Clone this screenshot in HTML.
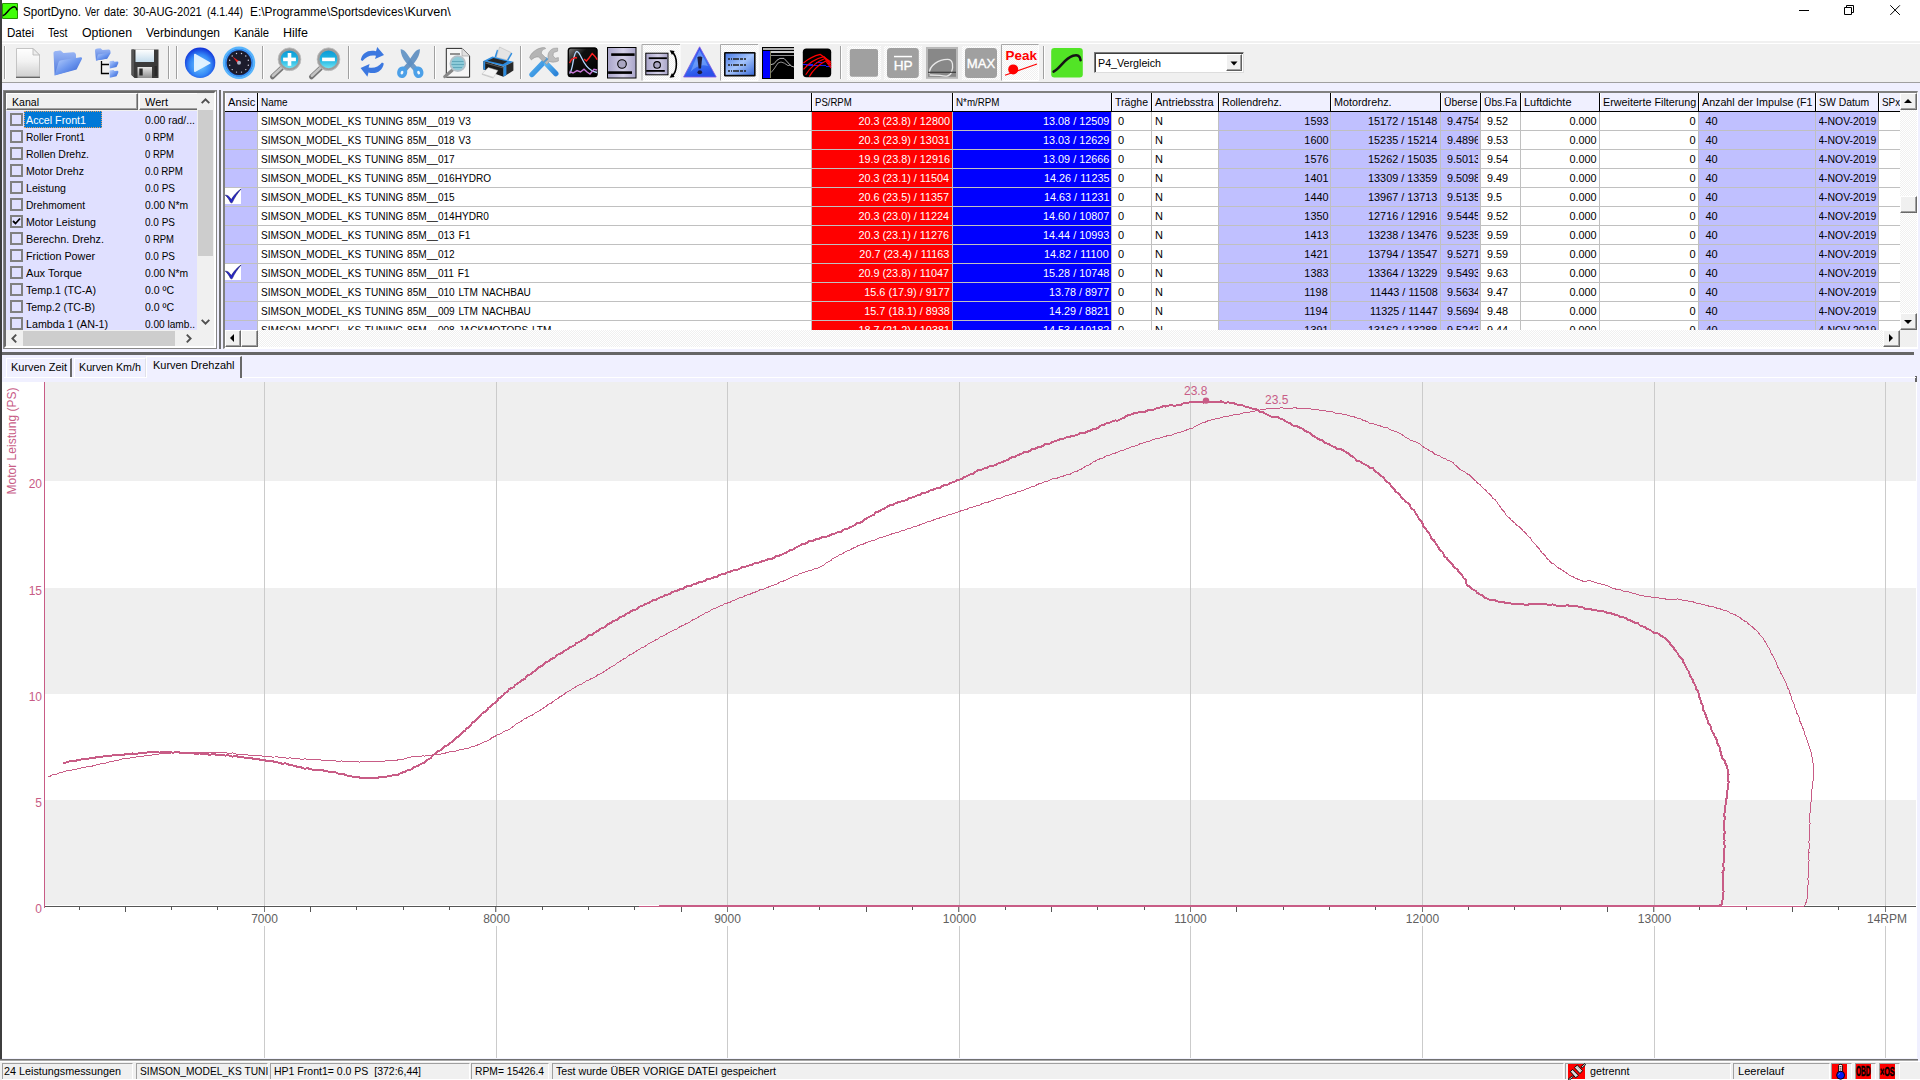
<!DOCTYPE html>
<html lang="de"><head><meta charset="utf-8"><title>SportDyno</title>
<style>
html,body{margin:0;padding:0;background:#F0F0FF;}
#app{position:relative;width:1920px;height:1080px;overflow:hidden;background:#F0F0FF;font-family:"Liberation Sans",sans-serif;font-size:11px;color:#000;}
.t{position:absolute;white-space:pre;line-height:1;}
.r{position:absolute;box-sizing:border-box;}
svg{position:absolute;overflow:visible;}
</style></head>
<body><div id="app">
<div class="r" style="left:0px;top:0px;width:1920px;height:41px;background:#FFFFFF;"></div>
<div class="r" style="left:0px;top:41px;width:1920px;height:41px;background:#F0F0F0;"></div>
<div class="r" style="left:0px;top:43px;width:1920px;height:1px;background:#FFFFFF;"></div>
<div class="r" style="left:0px;top:82px;width:1920px;height:1px;background:#A0A0A0;"></div>
<div class="r" style="left:0px;top:0px;width:2px;height:1080px;background:#3E3E3E;"></div>
<svg style="left:0;top:0" width="20" height="22" viewBox="0 0 20 22"><rect x="2" y="3" width="16" height="16" rx="1" fill="#228A00"/><rect x="2.9" y="3.9" width="14.2" height="14.2" fill="#40FF08"/><path d="M3.4 15.4C6 14.4 7.4 11.2 10 9C12 7.4 13.6 6.6 14.9 6.9C16 7.2 16.6 8.4 16.8 9.7" fill="none" stroke="#000" stroke-width="1.5" stroke-linecap="round"/></svg>
<span class="t" style="top:5.84px;font-size:12px;left:23.1px;transform:scaleX(0.9662);transform-origin:0 0;">SportDyno.</span>
<span class="t" style="top:5.84px;font-size:12px;left:85px;transform:scaleX(0.7993);transform-origin:0 0;">Ver</span>
<span class="t" style="top:5.84px;font-size:12px;left:104.4px;transform:scaleX(0.9138);transform-origin:0 0;">date:</span>
<span class="t" style="top:5.84px;font-size:12px;left:133.1px;transform:scaleX(0.9291);transform-origin:0 0;">30-AUG-2021</span>
<span class="t" style="top:5.84px;font-size:12px;left:206.9px;transform:scaleX(0.8728);transform-origin:0 0;">(4.1.44)</span>
<span class="t" style="top:5.84px;font-size:12px;left:250.3px;transform:scaleX(0.9889);transform-origin:0 0;">E:\Programme</span>
<span class="t" style="top:5.84px;font-size:12px;left:327.2px;transform:scaleX(0.9682);transform-origin:0 0;">\Sportsdevices</span>
<span class="t" style="top:5.84px;font-size:12px;left:403.6px;transform:scaleX(1.0469);transform-origin:0 0;">\Kurven\</span>
<svg style="left:1790px;top:0" width="130" height="22" viewBox="0 0 130 22"><g stroke="#000" stroke-width="1" fill="none"><path d="M9 10.5H19"/><path d="M54.5 7.5h7v7h-7z" fill="#fff"/><path d="M56.5 7.5v-2h7v7h-2"/><path d="M100.3 5.3l9.6 9.6M109.9 5.3l-9.6 9.6"/></g></svg>
<span class="t" style="top:27.04px;font-size:12px;left:7px;transform:scaleX(0.9637);transform-origin:0 0;">Datei</span>
<span class="t" style="top:27.04px;font-size:12px;left:48px;transform:scaleX(0.8857);transform-origin:0 0;">Test</span>
<span class="t" style="top:27.04px;font-size:12px;left:82px;transform:scaleX(1.0266);transform-origin:0 0;">Optionen</span>
<span class="t" style="top:27.04px;font-size:12px;left:146px;transform:scaleX(0.9989);transform-origin:0 0;">Verbindungen</span>
<span class="t" style="top:27.04px;font-size:12px;left:234px;transform:scaleX(0.9365);transform-origin:0 0;">Kanäle</span>
<span class="t" style="top:27.04px;font-size:12px;left:283px;transform:scaleX(1.0410);transform-origin:0 0;">Hilfe</span>
<div class="r" style="left:4px;top:46px;width:1px;height:33px;background:#A0A0A0;"></div>
<div class="r" style="left:5px;top:46px;width:1px;height:33px;background:#FFFFFF;"></div>
<div class="r" style="left:168px;top:46px;width:1px;height:33px;background:#A0A0A0;"></div>
<div class="r" style="left:169px;top:46px;width:1px;height:33px;background:#FFFFFF;"></div>
<div class="r" style="left:176px;top:46px;width:1px;height:33px;background:#A0A0A0;"></div>
<div class="r" style="left:177px;top:46px;width:1px;height:33px;background:#FFFFFF;"></div>
<div class="r" style="left:262px;top:46px;width:1px;height:33px;background:#A0A0A0;"></div>
<div class="r" style="left:263px;top:46px;width:1px;height:33px;background:#FFFFFF;"></div>
<div class="r" style="left:348px;top:46px;width:1px;height:33px;background:#A0A0A0;"></div>
<div class="r" style="left:349px;top:46px;width:1px;height:33px;background:#FFFFFF;"></div>
<div class="r" style="left:434px;top:46px;width:1px;height:33px;background:#A0A0A0;"></div>
<div class="r" style="left:435px;top:46px;width:1px;height:33px;background:#FFFFFF;"></div>
<div class="r" style="left:520px;top:46px;width:1px;height:33px;background:#A0A0A0;"></div>
<div class="r" style="left:521px;top:46px;width:1px;height:33px;background:#FFFFFF;"></div>
<div class="r" style="left:840px;top:46px;width:1px;height:33px;background:#A0A0A0;"></div>
<div class="r" style="left:841px;top:46px;width:1px;height:33px;background:#FFFFFF;"></div>
<div class="r" style="left:1043px;top:46px;width:1px;height:33px;background:#A0A0A0;"></div>
<div class="r" style="left:1044px;top:46px;width:1px;height:33px;background:#FFFFFF;"></div>
<div class="r" style="left:642px;top:44px;width:38px;height:36px;background:repeating-conic-gradient(#FFFFFF 0% 25%, #F0F0F0 0% 50%) 0 0/2px 2px;"></div>
<div class="r" style="left:721px;top:44px;width:37px;height:36px;background:repeating-conic-gradient(#FFFFFF 0% 25%, #F0F0F0 0% 50%) 0 0/2px 2px;"></div>
<div class="r" style="left:1002px;top:44px;width:36px;height:36px;background:repeating-conic-gradient(#FFFFFF 0% 25%, #F0F0F0 0% 50%) 0 0/2px 2px;"></div>
<div class="r" style="left:847px;top:46px;width:34px;height:34px;background:repeating-conic-gradient(#FFFFFF 0% 25%, #F0F0F0 0% 50%) 0 0/2px 2px;"></div>
<div class="r" style="left:884px;top:46px;width:38px;height:34px;background:repeating-conic-gradient(#FFFFFF 0% 25%, #F0F0F0 0% 50%) 0 0/2px 2px;"></div>
<div class="r" style="left:962px;top:46px;width:38px;height:34px;background:repeating-conic-gradient(#FFFFFF 0% 25%, #F0F0F0 0% 50%) 0 0/2px 2px;"></div>
<svg style="left:0;top:0" width="1260" height="84" viewBox="0 0 1260 84">
<defs>
<linearGradient id="gdoc" x1="0" y1="0" x2="0" y2="1"><stop offset="0" stop-color="#FFFFFF"/><stop offset="0.45" stop-color="#F2F2F2"/><stop offset="1" stop-color="#CFCFCF"/></linearGradient>
<linearGradient id="gfold" x1="0" y1="0" x2="1" y2="1"><stop offset="0" stop-color="#BCD2FC"/><stop offset="0.5" stop-color="#6C96EE"/><stop offset="1" stop-color="#2E5ACC"/></linearGradient>
<linearGradient id="gfoldb" x1="0" y1="0" x2="0" y2="1"><stop offset="0" stop-color="#9CB8F6"/><stop offset="1" stop-color="#4C76DA"/></linearGradient>
<radialGradient id="gplay" cx="0.5" cy="0.58" r="0.58"><stop offset="0" stop-color="#74CCFF"/><stop offset="0.6" stop-color="#3488F6"/><stop offset="1" stop-color="#1030D8"/></radialGradient>
<linearGradient id="glens" x1="0" y1="0" x2="0" y2="1"><stop offset="0" stop-color="#0896D4"/><stop offset="0.55" stop-color="#24B8E4"/><stop offset="1" stop-color="#7CE8F4"/></linearGradient>
<linearGradient id="gtri" x1="0" y1="0" x2="0.3" y2="1"><stop offset="0" stop-color="#2A3CF0"/><stop offset="0.6" stop-color="#3C78F4"/><stop offset="1" stop-color="#2A50E8"/></linearGradient>
<linearGradient id="glist" x1="0" y1="0" x2="1" y2="1"><stop offset="0" stop-color="#4C7CE4"/><stop offset="0.5" stop-color="#A4C4FC"/><stop offset="1" stop-color="#3C6CD8"/></linearGradient>
<linearGradient id="gscr" x1="0" y1="0" x2="1" y2="0"><stop offset="0" stop-color="#A8A4C8"/><stop offset="0.55" stop-color="#D4D0E8"/><stop offset="1" stop-color="#A8A4C8"/></linearGradient>
<linearGradient id="gmet" x1="0" y1="0" x2="0" y2="1"><stop offset="0" stop-color="#E8E8E8"/><stop offset="1" stop-color="#8C8C8C"/></linearGradient>
<linearGradient id="gflop" x1="0" y1="0" x2="0" y2="1"><stop offset="0" stop-color="#FFFFFF"/><stop offset="1" stop-color="#C4DCEC"/></linearGradient>
<linearGradient id="ghand" x1="0" y1="0" x2="1" y2="1"><stop offset="0" stop-color="#58B4F0"/><stop offset="1" stop-color="#2C84D8"/></linearGradient>
<linearGradient id="ggloss" x1="0" y1="0" x2="1" y2="1"><stop offset="0" stop-color="#8A8A8A"/><stop offset="0.35" stop-color="#101010"/><stop offset="1" stop-color="#000"/></linearGradient>
</defs>
<path d="M642 80.5V44.5H680" fill="none" stroke="#A8A8A8" stroke-width="1"/><path d="M643 80.5H680V45" fill="none" stroke="#FFFFFF" stroke-width="1"/>
<path d="M720.5 80.5V44.5H758" fill="none" stroke="#A8A8A8" stroke-width="1"/><path d="M721.5 80.5H758V45" fill="none" stroke="#FFFFFF" stroke-width="1"/>
<path d="M1001.5 80.5V44.5H1038.5" fill="none" stroke="#A8A8A8" stroke-width="1"/><path d="M1002.5 80.5H1038.5V45" fill="none" stroke="#FFFFFF" stroke-width="1"/>
<path d="M16.5 48.5H33L39.5 55V77H16.5Z" fill="url(#gdoc)" stroke="#C4C4C4" stroke-width="1"/><path d="M16 77.3H40" stroke="#5A5A5A" stroke-width="1.2"/><path d="M33 48.5V55H39.5Z" fill="#EDEDED" stroke="#B4B4B4" stroke-width="0.8"/>
<path d="M53.5 53C53.5 51.5 55 51 56.5 51L60 50.6C61.5 50.6 62 52.5 63.5 53L73 52.2C75 52 76 53.5 76 55V69L54.6 75.3Z" fill="url(#gfoldb)"/><path d="M58.5 62.5C59 61 60 60.5 61.5 60.3L80.5 57.2C82 57 82.4 58 81.8 59.2L76.6 69.6L54.6 75.4Z" fill="url(#gfold)"/>
<path d="M95 51C95 49 96 48.5 97.5 48.4L100.5 48.2L102.5 50L108.5 49.6C110 49.5 110.5 50.5 110.5 52L107 58.5L96 60.5Z" fill="url(#gfoldb)"/><path d="M98 54.5L111 52.5L107.2 58.8L95.8 60.6Z" fill="url(#gfold)"/>
<path d="M101.5 61V73.5H109M101.5 64.5H109" fill="none" stroke="#000" stroke-width="1.3"/>
<path d="M109.5 62.2C109.5 61.2 110 61 111 61L113.5 60.8L114.5 61.8L117.5 61.6C118.3 61.6 118.5 62.5 118.2 63.5L116.5 67L109.8 68.6Z" fill="url(#gfold)"/>
<path d="M109.5 71.4C109.5 70.4 110 70.2 111 70.2L113.5 70.0L114.5 71.0L117.5 70.8C118.3 70.8 118.5 71.7 118.2 72.7L116.5 76.2L109.8 77.8Z" fill="url(#gfold)"/>
<path d="M131.5 49.5H158.5V78H134.5L131.5 75Z" fill="#3A3A3A"/><path d="M131.5 49.5H134V76.5L131.5 75Z" fill="#555"/><rect x="135.5" y="49.5" width="18.5" height="12.5" fill="url(#gflop)"/><rect x="137.5" y="67" width="14.5" height="11" fill="url(#gmet)"/><rect x="139.3" y="68.5" width="3.4" height="7" fill="#2A2A2A"/><rect x="154.5" y="66" width="2.5" height="10" fill="#2A2A2A"/>
<circle cx="200.1" cy="62.8" r="15.2" fill="url(#gplay)"/><path d="M194 54.8C194 53.8 194.8 53.6 195.6 54L210 62.2C210.8 62.7 210.8 63.4 210 63.8L195.6 71.8C194.8 72.2 194 72 194 71Z" fill="#EAF6FF" opacity="0.93"/>
<circle cx="239" cy="62.8" r="15" fill="#1C4CC0" stroke="#58B4FC" stroke-width="2.4"/><circle cx="239" cy="62.8" r="13.2" fill="none" stroke="#3C98F4" stroke-width="1.4"/><circle cx="239" cy="62.8" r="12.2" fill="#1C1C2C"/>
<circle cx="248.3" cy="65.3" r="0.7" fill="#D8D8E8"/>
<circle cx="245.8" cy="69.6" r="0.7" fill="#D8D8E8"/>
<circle cx="241.5" cy="72.1" r="0.7" fill="#D8D8E8"/>
<circle cx="236.5" cy="72.1" r="0.7" fill="#D8D8E8"/>
<circle cx="232.2" cy="69.6" r="0.7" fill="#D8D8E8"/>
<circle cx="229.7" cy="65.3" r="0.7" fill="#D8D8E8"/>
<circle cx="229.7" cy="60.3" r="0.7" fill="#D8D8E8"/>
<circle cx="232.2" cy="56.0" r="0.7" fill="#D8D8E8"/>
<circle cx="236.5" cy="53.5" r="0.7" fill="#D8D8E8"/>
<circle cx="241.5" cy="53.5" r="0.7" fill="#D8D8E8"/>
<circle cx="245.8" cy="56.0" r="0.7" fill="#D8D8E8"/>
<circle cx="248.3" cy="60.3" r="0.7" fill="#D8D8E8"/>
<path d="M232.4 56.4L240 61.8L238 63.8Z" fill="#F02020"/><circle cx="239" cy="62.8" r="2" fill="#A8B0C4"/>
<path d="M272.5 76.8L281.5 68.2" stroke="#747474" stroke-width="5" stroke-linecap="round"/><path d="M272.9 75.8L280.9 68.2" stroke="#C4C4C4" stroke-width="2.6" stroke-linecap="round"/>
<circle cx="289.5" cy="59.3" r="10.2" fill="url(#glens)" stroke="#9C9C9C" stroke-width="2.6"/><circle cx="289.5" cy="59.3" r="11.4" fill="none" stroke="#C4C4C4" stroke-width="0.8"/>
<rect x="283.1" y="57.6" width="12.8" height="3.6" fill="#fff"/>
<rect x="287.7" y="53" width="3.6" height="12.8" fill="#fff"/>
<path d="M311.5 76.8L320.5 68.2" stroke="#747474" stroke-width="5" stroke-linecap="round"/><path d="M311.9 75.8L319.9 68.2" stroke="#C4C4C4" stroke-width="2.6" stroke-linecap="round"/>
<circle cx="328.5" cy="59.3" r="10.2" fill="url(#glens)" stroke="#9C9C9C" stroke-width="2.6"/><circle cx="328.5" cy="59.3" r="11.4" fill="none" stroke="#C4C4C4" stroke-width="0.8"/>
<rect x="322.1" y="57.6" width="12.8" height="3.6" fill="#fff"/>
<path d="M360.8 60C362 53 368 49.5 376 51.2L377.2 47L384 55L375 59L376 55.8C371 54.5 366 56.5 362.5 61Z" fill="#3C78E0"/><path d="M383.8 63.5C382.5 71 376.5 74.5 368.5 72.6L367.4 76.8L360.6 68L369.6 64L368.6 67.4C373.5 68.8 378.6 66.8 382 62.5Z" fill="#3C78E0"/>
<path d="M400.6 49.2C403 48.8 405.6 51.4 407.6 54.6L413 62.6L418.2 68.2L414.2 71.4C411.5 67.8 408.6 65 406 62.4C402.6 58.4 400.6 53.6 400.6 49.2Z" fill="#6C9AC8"/><path d="M420 49.2C417.6 48.8 415 51.4 413 54.6L407.6 62.6L402.4 68.2L406.4 71.4C409.1 67.8 412 65 414.6 62.4C418 58.4 420 53.6 420 49.2Z" fill="#5E8EC0" opacity="0.92"/>
<path d="M402.2 66.4C405.4 66.2 407.6 68.6 407.2 72.4C406.8 76 404.4 78.2 401.6 78C398.6 77.8 396.8 75.2 397.2 71.8C397.6 68.6 399.6 66.6 402.2 66.4Z" fill="#4CA0E8"/><path d="M418.4 66.4C415.2 66.2 413 68.6 413.4 72.4C413.8 76 416.2 78.2 419 78C422 77.8 423.8 75.2 423.4 71.8C423 68.6 421 66.6 418.4 66.4Z" fill="#4CA0E8"/><ellipse cx="402" cy="72.6" rx="1.3" ry="1.9" fill="#F4F8FC" transform="rotate(25 402 72.6)"/><ellipse cx="418.6" cy="72.6" rx="1.3" ry="1.9" fill="#F4F8FC" transform="rotate(-25 418.6 72.6)"/>
<path d="M446.3 48.4H462L469.6 56V77.2H446.3Z" fill="#F6F6F6" stroke="#101010" stroke-width="0.9"/><path d="M462 48.5V56H469.5" fill="#E0E0E0" stroke="#A0A0A0" stroke-width="0.7"/><path d="M450 54H460" stroke="#505050" stroke-width="1.2"/><path d="M452.2 70.2L444.8 76.6" stroke="#888" stroke-width="3.2" stroke-linecap="round"/><circle cx="457.8" cy="63.6" r="7.4" fill="#8CCAD8" stroke="#B4C0C8" stroke-width="1.8"/><path d="M452 61.5H463.5M451.5 64.5H464M453 67.5H462" stroke="#5CA4B8" stroke-width="0.9"/>
<path d="M499.6 47L511.2 52.6L507.2 60L496.4 57.2Z" fill="#E4E4E4" stroke="#B4B4B4" stroke-width="0.5"/><path d="M498 50.5L496.2 57.4L494.6 56.8L497 49.6Z" fill="#2C8CE0"/><path d="M511.2 52.8L512.4 53.6L508.4 60.6L507 60Z" fill="#2C8CE0"/>
<path d="M483.4 61L492.4 56.4L496.6 57.4L507 60.2L513.4 61.8L503.4 66.6Z" fill="#2C8CE0"/><path d="M487.5 60.8L493.5 58L507.5 61.6L502.8 64.2Z" fill="#262626"/>
<path d="M483.4 61L503.4 66.8V76.8L483.4 69.4Z" fill="#1A1A1A"/><path d="M503.4 66.8L513.4 61.8V70.6L503.4 76.8Z" fill="#2A2A2A"/><path d="M483.4 61L485.2 61.6V70L483.4 69.4Z" fill="#2C8CE0"/><path d="M503.4 66.8L506.4 65.4V75L503.4 76.8Z" fill="#2C8CE0"/><path d="M485.2 62.2L503.4 67.4V68.6L485.2 63.4Z" fill="#555"/>
<path d="M488.2 67.6L497.8 70.4L493.6 77.4L482 73.8Z" fill="#F4F4F4" stroke="#BcBcBc" stroke-width="0.5"/><path d="M482 73.8L493.6 77.4L493.2 78.4L481.8 74.8Z" fill="#C8C8C8"/>
<path d="M532 74.5L545.8 60.2" stroke="url(#ghand)" stroke-width="5.4" stroke-linecap="round"/><path d="M555.8 73.6L546.6 64" stroke="url(#ghand)" stroke-width="5.4" stroke-linecap="round"/>
<path d="M529.6 57.5C531 53 536 48.6 542.5 47.6C544 47.4 545.8 47.8 545.6 48.6C542.5 49.5 541 51.5 541.4 53.5L546.5 58.6L543.4 61.8L538.6 57C536 56.5 533 58 531.4 60Z" fill="#B4B4B4" stroke="#8C8C8C" stroke-width="0.5"/>
<path d="M544.8 62.6L548.4 59C547 55 548.6 50.4 553.4 48.4L557.6 48V51.2L553.4 52.6L553 56L555.4 58.2L558.4 57.6V61C554.6 62.6 551.6 62.4 549.4 61.4L546.8 64.6Z" fill="#BCBCBC" stroke="#8C8C8C" stroke-width="0.5"/>
<rect x="567.6" y="47.4" width="30" height="29.8" rx="3" fill="url(#ggloss)"/><rect x="568.4" y="48.2" width="28.4" height="28.2" rx="2.4" fill="none" stroke="#000" stroke-width="1.2"/>
<path d="M569.5 73.5C573.5 70 573 51.5 576.8 51.5C581.5 51.5 582 69 597 72.5" fill="none" stroke="#B4D8FF" stroke-width="1.3"/><path d="M569.5 63L571.5 59.5L575 57.5L577 58M584 59L586.4 61L589 58L592.2 53.6L595 56.4L597.2 59.6" fill="none" stroke="#FF2020" stroke-width="1.4"/><path d="M569.5 71.5L573 73L577 70.6L580.5 72L584 69.2L587 72L590 74L594 69.2L597 70" fill="none" stroke="#C878D8" stroke-width="1.4"/>
<rect x="607.5" y="47.5" width="28.5" height="30.5" fill="url(#gscr)" stroke="#000" stroke-width="1"/><rect x="611.2" y="53.3" width="23.4" height="2.6" fill="#000"/><rect x="608.1" y="71.3" width="23.9" height="2.6" fill="#000"/><circle cx="622.0" cy="64.0" r="4.3" fill="#AAA6C2" stroke="#000" stroke-width="1.1"/>
<rect x="645.8" y="53.2" width="22.200000000000045" height="21.599999999999994" fill="url(#gscr)" stroke="#000" stroke-width="1"/><rect x="648.7" y="57.3" width="18.2" height="1.8" fill="#000"/><rect x="646.2" y="70.0" width="18.6" height="1.8" fill="#000"/><circle cx="657.1" cy="64.9" r="3.3" fill="#AAA6C2" stroke="#000" stroke-width="1.1"/>
<path d="M671.5 51.5C678 56 678 72 671.5 76.5" fill="none" stroke="#000" stroke-width="1.6"/><path d="M669.6 50.2L674.6 51L672 55Z" fill="#000"/><path d="M669.6 77.8L674.6 77L672 73Z" fill="#000"/>
<path d="M699.6 46.8L716.2 77H683.6Z" fill="url(#gtri)" stroke="#8458E0" stroke-width="0.8" stroke-linejoin="round"/><path d="M699.4 50L708 66C702 64 696 66 690.4 72Z" fill="#9CC4FF" opacity="0.45"/><path d="M697.4 57.5C697.4 56 702.2 56 702.2 57.5L701 68.6H698.6Z" fill="#1C1C3C"/><ellipse cx="699.8" cy="72.2" rx="2.3" ry="2" fill="#1C1C3C"/>
<rect x="724" y="52" width="31.6" height="24.4" rx="1.2" fill="#0C0C0C"/><rect x="725.6" y="53.6" width="28.4" height="21.2" fill="url(#glist)"/><path d="M728 59H747M728 65H747M728 71H747" stroke="#20201C" stroke-width="1.7" stroke-dasharray="2 1 1 1 6 1 3 1"/>
<g shape-rendering="crispEdges"><rect x="762" y="47" width="32" height="32" fill="#000"/><rect x="763" y="51" width="8" height="27" fill="#0000FF"/><rect x="763" y="48" width="31" height="2" fill="#B0B0B0"/><rect x="771" y="51" width="23" height="2" fill="#C8C8C8"/><rect x="771" y="55" width="23" height="1" fill="#909090"/><rect x="770" y="51" width="1" height="27" fill="#808060"/></g>
<path d="M771 64.6L774 63.8L777 60.2L780 58.4L784 58.4L787.4 62L791 66L794 67" fill="none" stroke="#B4B4B4" stroke-width="1"/><path d="M771 72.6L774 69L778 63L781 62L784.4 63.2L788 65.6L791 65" fill="none" stroke="#909090" stroke-width="1"/>
<rect x="802.8" y="48.6" width="28.4" height="28.6" rx="3.6" fill="#000"/><path d="M803 64.5H813M816 62.5H823M806 65.5H826M827 63.5H831M826 66.5H831" stroke="#1818F0" stroke-width="1"/>
<path d="M803.5 63Q811 56.5 820.3 54.4L830.8 62" fill="none" stroke="#FF0000" stroke-width="1.2"/>
<path d="M803.5 69.3Q812 59.5 823.9 56.6L831 64" fill="none" stroke="#FF0000" stroke-width="1.2"/>
<path d="M805.7 74.8Q813 63 825 58.5L831 66" fill="none" stroke="#FF0000" stroke-width="1.2"/>
<path d="M809.3 76.6Q815 66.5 825.7 61L831 68" fill="none" stroke="#FF0000" stroke-width="1.2"/>
<rect x="849.8" y="49" width="28.2" height="27.8" rx="2" fill="#A0A0A0"/>
<rect x="887" y="48" width="31.8" height="30" rx="3.4" fill="#A0A0A0"/><rect x="894" y="55.8" width="18" height="1.5" fill="#fff"/>
<text x="903.1" y="69.7" text-anchor="middle" font-family="Liberation Sans, sans-serif" font-size="13.6" stroke="#fff" stroke-width="0.35" fill="#fff">HP</text>
<rect x="926" y="47" width="32" height="31.8" fill="#B8B8B8"/><rect x="928" y="49" width="28" height="27.8" fill="#888"/><path d="M929.4 73.6C929 65 939 59.6 947.4 59.4C953.4 59.2 953.6 67 951.4 72.6C949.6 77 945 76.4 940 75.4L929.6 75" fill="none" stroke="#E8E8E8" stroke-width="1.3"/><path d="M928 72.3H956" stroke="#3C3C3C" stroke-width="1.2"/>
<rect x="965" y="48" width="32" height="30" rx="3.4" fill="#A0A0A0"/>
<text x="981" y="67.6" text-anchor="middle" font-family="Liberation Sans, sans-serif" font-size="13" stroke="#fff" stroke-width="0.35" fill="#fff" textLength="28.4" lengthAdjust="spacingAndGlyphs">MAX</text>
<text x="1005.6" y="60.4" font-family="Liberation Sans, sans-serif" font-weight="bold" font-size="13.4" fill="#FF0000" textLength="31.4" lengthAdjust="spacingAndGlyphs">Peak</text><path d="M1005 75.2L1037 64" stroke="#FF0000" stroke-width="1.2"/><circle cx="1013.2" cy="69.4" r="5" fill="#FF0000"/>
<rect x="1051.2" y="48" width="31.6" height="29.4" rx="3.2" fill="#52E426"/><path d="M1053.6 71.6C1061 67.5 1064.5 58.4 1073 55.8C1078 54.4 1080 56 1080.6 60.2" fill="none" stroke="#141414" stroke-width="2.5" stroke-linecap="round"/>
</svg>
<div class="r" style="left:1094px;top:52px;width:150px;height:21px;background:#FFFFFF;border:1px solid #7A7A7A;border-right-color:#ddd;border-bottom-color:#ddd;box-shadow:inset 1px 1px 0 #404040;"></div>
<span class="t" style="top:57.69px;font-size:11px;left:1098.3px;transform:scaleX(0.9718);transform-origin:0 0;">P4_Vergleich</span>
<div class="r" style="left:1226px;top:54px;width:16px;height:17px;background:#F0F0F0;border:1px solid #fff;border-right-color:#606060;border-bottom-color:#606060;box-shadow:inset -1px -1px 0 #A0A0A0;"></div>
<svg style="left:1230px;top:61px" width="8" height="5" viewBox="0 0 8 5"><path d="M0.5 0.5h7l-3.5 4z" fill="#000"/></svg>
<div class="r" style="left:3px;top:90px;width:214px;height:259px;background:#E0E0FF;border:1px solid #868686;"></div>
<div class="r" style="left:4px;top:91px;width:212px;height:257px;border:2px solid #696969;border-right:2px solid #FFFFFF;border-bottom:2px solid #FFFFFF;"></div>
<div class="r" style="left:6px;top:93px;width:191px;height:18px;background:#F0F0F0;"></div>
<div class="r" style="left:6px;top:93px;width:132px;height:17px;background:#F0F0F0;border-right:1px solid #696969;border-bottom:1px solid #696969;border-top:1px solid #fff;border-left:1px solid #fff;box-shadow:inset -1px -1px 0 #A0A0A0;"></div>
<div class="r" style="left:139px;top:93px;width:58px;height:17px;background:#F0F0F0;border-bottom:1px solid #696969;border-top:1px solid #fff;border-left:1px solid #fff;box-shadow:inset 0 -1px 0 #A0A0A0;"></div>
<span class="t" style="top:96.69px;font-size:11px;left:12px;transform:scaleX(0.9595);transform-origin:0 0;">Kanal</span>
<span class="t" style="top:96.69px;font-size:11px;left:145px;transform:scaleX(0.9986);transform-origin:0 0;">Wert</span>
<div class="r" style="left:197px;top:93px;width:17px;height:237px;background:#F0F0F0;"></div>
<div class="r" style="left:198px;top:110px;width:15px;height:146px;background:#CDCDCD;"></div>
<svg style="left:201px;top:98px" width="9" height="6" viewBox="0 0 9 6"><path d="M0.7 5.2L4.5 1.4L8.3 5.2" fill="none" stroke="#505050" stroke-width="1.9"/></svg>
<svg style="left:201px;top:319px" width="9" height="6" viewBox="0 0 9 6"><path d="M0.7 0.8L4.5 4.6L8.3 0.8" fill="none" stroke="#505050" stroke-width="1.9"/></svg>
<div class="r" style="left:6px;top:330px;width:208px;height:16px;background:#F0F0F0;"></div>
<div class="r" style="left:23px;top:331px;width:152px;height:15px;background:#CDCDCD;"></div>
<svg style="left:11px;top:334px" width="6" height="9" viewBox="0 0 6 9"><path d="M5.2 0.7L1.4 4.5L5.2 8.3" fill="none" stroke="#505050" stroke-width="1.9"/></svg>
<svg style="left:186px;top:334px" width="6" height="9" viewBox="0 0 6 9"><path d="M0.8 0.7L4.6 4.5L0.8 8.3" fill="none" stroke="#505050" stroke-width="1.9"/></svg>
<div class="r" style="left:6px;top:111px;width:191px;height:219px;overflow:hidden">
<div class="r" style="left:4px;top:2px;width:13px;height:13px;border:2px solid #808080;"></div>
<div class="r" style="left:18px;top:0px;width:78px;height:17px;background:#0078D7;outline:1px dotted #E8A060;outline-offset:-1px;"></div>
<span class="t" style="left:20.3px;top:3.69px;color:#fff;transform:scaleX(0.9717);transform-origin:0 0">Accel Front1</span>
<span class="t" style="left:139px;top:3.69px;transform:scaleX(0.9507);transform-origin:0 0">0.00 rad/...</span>
<div class="r" style="left:4px;top:19px;width:13px;height:13px;border:2px solid #808080;"></div>
<span class="t" style="left:20.3px;top:20.69px;transform:scaleX(0.9280);transform-origin:0 0">Roller Front1</span>
<span class="t" style="left:139px;top:20.69px;transform:scaleX(0.8625);transform-origin:0 0">0 RPM</span>
<div class="r" style="left:4px;top:36px;width:13px;height:13px;border:2px solid #808080;"></div>
<span class="t" style="left:20.3px;top:37.69px;transform:scaleX(0.9454);transform-origin:0 0">Rollen Drehz.</span>
<span class="t" style="left:139px;top:37.69px;transform:scaleX(0.8625);transform-origin:0 0">0 RPM</span>
<div class="r" style="left:4px;top:53px;width:13px;height:13px;border:2px solid #808080;"></div>
<span class="t" style="left:20.3px;top:54.69px;transform:scaleX(0.9582);transform-origin:0 0">Motor Drehz</span>
<span class="t" style="left:139px;top:54.69px;transform:scaleX(0.8879);transform-origin:0 0">0.0 RPM</span>
<div class="r" style="left:4px;top:70px;width:13px;height:13px;border:2px solid #808080;"></div>
<span class="t" style="left:20.3px;top:71.69px;transform:scaleX(0.9617);transform-origin:0 0">Leistung</span>
<span class="t" style="left:139px;top:71.69px;transform:scaleX(0.9082);transform-origin:0 0">0.0 PS</span>
<div class="r" style="left:4px;top:87px;width:13px;height:13px;border:2px solid #808080;"></div>
<span class="t" style="left:20.3px;top:88.69px;transform:scaleX(0.9280);transform-origin:0 0">Drehmoment</span>
<span class="t" style="left:139px;top:88.69px;transform:scaleX(0.9376);transform-origin:0 0">0.00 N*m</span>
<div class="r" style="left:4px;top:104px;width:13px;height:13px;border:2px solid #808080;"></div>
<svg style="left:6px;top:106px" width="9" height="9" viewBox="0 0 9 9"><path d="M1 4L3.5 6.5L8 1.5" fill="none" stroke="#000" stroke-width="1.8"/></svg>
<span class="t" style="left:20.3px;top:105.69px;transform:scaleX(0.9620);transform-origin:0 0">Motor Leistung</span>
<span class="t" style="left:139px;top:105.69px;transform:scaleX(0.9082);transform-origin:0 0">0.0 PS</span>
<div class="r" style="left:4px;top:121px;width:13px;height:13px;border:2px solid #808080;"></div>
<span class="t" style="left:20.3px;top:122.69px;transform:scaleX(0.9813);transform-origin:0 0">Berechn. Drehz.</span>
<span class="t" style="left:139px;top:122.69px;transform:scaleX(0.8625);transform-origin:0 0">0 RPM</span>
<div class="r" style="left:4px;top:138px;width:13px;height:13px;border:2px solid #808080;"></div>
<span class="t" style="left:20.3px;top:139.69px;transform:scaleX(0.9816);transform-origin:0 0">Friction Power</span>
<span class="t" style="left:139px;top:139.69px;transform:scaleX(0.9082);transform-origin:0 0">0.0 PS</span>
<div class="r" style="left:4px;top:155px;width:13px;height:13px;border:2px solid #808080;"></div>
<span class="t" style="left:20.3px;top:156.69px;transform:scaleX(1.0099);transform-origin:0 0">Aux Torque</span>
<span class="t" style="left:139px;top:156.69px;transform:scaleX(0.9376);transform-origin:0 0">0.00 N*m</span>
<div class="r" style="left:4px;top:172px;width:13px;height:13px;border:2px solid #808080;"></div>
<span class="t" style="left:20.3px;top:173.69px;transform:scaleX(0.9705);transform-origin:0 0">Temp.1 (TC-A)</span>
<span class="t" style="left:139px;top:173.69px;transform:scaleX(0.9567);transform-origin:0 0">0.0 ºC</span>
<div class="r" style="left:4px;top:189px;width:13px;height:13px;border:2px solid #808080;"></div>
<span class="t" style="left:20.3px;top:190.69px;transform:scaleX(0.9567);transform-origin:0 0">Temp.2 (TC-B)</span>
<span class="t" style="left:139px;top:190.69px;transform:scaleX(0.9567);transform-origin:0 0">0.0 ºC</span>
<div class="r" style="left:4px;top:206px;width:13px;height:13px;border:2px solid #808080;"></div>
<span class="t" style="left:20.3px;top:207.69px;transform:scaleX(0.9719);transform-origin:0 0">Lambda 1 (AN-1)</span>
<span class="t" style="left:139px;top:207.69px;transform:scaleX(0.9187);transform-origin:0 0">0.00 lamb..</span>
</div>
<div class="r" style="left:219px;top:90px;width:2px;height:259px;background:#707070;"></div>
<div class="r" style="left:2px;top:352px;width:1912px;height:3px;background:#666666;"></div>
<div class="r" style="left:1915px;top:376px;width:2px;height:6px;background:#666666;"></div>
<div class="r" style="left:223px;top:91px;width:1695px;height:258px;background:#FFFFFF;border:2px solid #808080;border-right:1px solid #fff;border-bottom:1px solid #fff;"></div>
<div class="r" style="left:225px;top:93px;width:1675px;height:237px;overflow:hidden;background:#fff">
<div class="r" style="left:0px;top:19px;width:32px;height:218px;background:#C0C0FF;"></div>
<div class="r" style="left:587px;top:19px;width:140px;height:218px;background:#FF0000;"></div>
<div class="r" style="left:728px;top:19px;width:158px;height:218px;background:#0000FF;"></div>
<div class="r" style="left:994px;top:19px;width:111px;height:218px;background:#C0C0FF;"></div>
<div class="r" style="left:1106px;top:19px;width:109px;height:218px;background:#C0C0FF;"></div>
<div class="r" style="left:1216px;top:19px;width:39px;height:218px;background:#C0C0FF;"></div>
<div class="r" style="left:1474px;top:19px;width:116px;height:218px;background:#C0C0FF;"></div>
<div class="r" style="left:1591px;top:19px;width:62px;height:218px;background:#C0C0FF;"></div>
<div class="r" style="left:0px;top:37px;width:1675px;height:1px;background:#C0C0C0;"></div>
<div class="r" style="left:0px;top:56px;width:1675px;height:1px;background:#C0C0C0;"></div>
<div class="r" style="left:0px;top:75px;width:1675px;height:1px;background:#C0C0C0;"></div>
<div class="r" style="left:0px;top:94px;width:1675px;height:1px;background:#C0C0C0;"></div>
<div class="r" style="left:0px;top:113px;width:1675px;height:1px;background:#C0C0C0;"></div>
<div class="r" style="left:0px;top:132px;width:1675px;height:1px;background:#C0C0C0;"></div>
<div class="r" style="left:0px;top:151px;width:1675px;height:1px;background:#C0C0C0;"></div>
<div class="r" style="left:0px;top:170px;width:1675px;height:1px;background:#C0C0C0;"></div>
<div class="r" style="left:0px;top:189px;width:1675px;height:1px;background:#C0C0C0;"></div>
<div class="r" style="left:0px;top:208px;width:1675px;height:1px;background:#C0C0C0;"></div>
<div class="r" style="left:0px;top:227px;width:1675px;height:1px;background:#C0C0C0;"></div>
<div class="r" style="left:0px;top:246px;width:1675px;height:1px;background:#C0C0C0;"></div>
<div class="r" style="left:32px;top:19px;width:1px;height:218px;background:#C0C0C0;"></div>
<div class="r" style="left:586px;top:19px;width:1px;height:218px;background:#C0C0C0;"></div>
<div class="r" style="left:727px;top:19px;width:1px;height:218px;background:#C0C0C0;"></div>
<div class="r" style="left:886px;top:19px;width:1px;height:218px;background:#C0C0C0;"></div>
<div class="r" style="left:926px;top:19px;width:1px;height:218px;background:#C0C0C0;"></div>
<div class="r" style="left:993px;top:19px;width:1px;height:218px;background:#C0C0C0;"></div>
<div class="r" style="left:1105px;top:19px;width:1px;height:218px;background:#C0C0C0;"></div>
<div class="r" style="left:1215px;top:19px;width:1px;height:218px;background:#C0C0C0;"></div>
<div class="r" style="left:1255px;top:19px;width:1px;height:218px;background:#C0C0C0;"></div>
<div class="r" style="left:1295px;top:19px;width:1px;height:218px;background:#C0C0C0;"></div>
<div class="r" style="left:1374px;top:19px;width:1px;height:218px;background:#C0C0C0;"></div>
<div class="r" style="left:1473px;top:19px;width:1px;height:218px;background:#C0C0C0;"></div>
<div class="r" style="left:1590px;top:19px;width:1px;height:218px;background:#C0C0C0;"></div>
<div class="r" style="left:1653px;top:19px;width:1px;height:218px;background:#C0C0C0;"></div>
<div class="r" style="left:1675px;top:19px;width:1px;height:218px;background:#C0C0C0;"></div>
<div class="r" style="left:0px;top:0px;width:1675px;height:18px;background:#F0F0FF;"></div>
<div class="r" style="left:0px;top:18px;width:1675px;height:1px;background:#000;"></div>
<div class="r" style="left:32px;top:0px;width:1px;height:19px;background:#000;"></div>
<div class="r" style="left:0px;top:0px;width:1px;height:18px;background:#FFF;"></div>
<div class="r" style="left:1px;top:0;width:31px;height:18px;overflow:hidden"><span class="t" style="left:2px;top:3.69px;transform:scaleX(1.013);transform-origin:0 0">Ansic</span></div>
<div class="r" style="left:586px;top:0px;width:1px;height:19px;background:#000;"></div>
<div class="r" style="left:33px;top:0px;width:1px;height:18px;background:#FFF;"></div>
<div class="r" style="left:34px;top:0;width:552px;height:18px;overflow:hidden"><span class="t" style="left:2px;top:3.69px;transform:scaleX(0.906);transform-origin:0 0">Name</span></div>
<div class="r" style="left:727px;top:0px;width:1px;height:19px;background:#000;"></div>
<div class="r" style="left:587px;top:0px;width:1px;height:18px;background:#FFF;"></div>
<div class="r" style="left:588px;top:0;width:139px;height:18px;overflow:hidden"><span class="t" style="left:2px;top:3.69px;transform:scaleX(0.871);transform-origin:0 0">PS/RPM</span></div>
<div class="r" style="left:886px;top:0px;width:1px;height:19px;background:#000;"></div>
<div class="r" style="left:728px;top:0px;width:1px;height:18px;background:#FFF;"></div>
<div class="r" style="left:729px;top:0;width:157px;height:18px;overflow:hidden"><span class="t" style="left:2px;top:3.69px;transform:scaleX(0.89);transform-origin:0 0">N*m/RPM</span></div>
<div class="r" style="left:926px;top:0px;width:1px;height:19px;background:#000;"></div>
<div class="r" style="left:887px;top:0px;width:1px;height:18px;background:#FFF;"></div>
<div class="r" style="left:888px;top:0;width:38px;height:18px;overflow:hidden"><span class="t" style="left:2px;top:3.69px;transform:scaleX(0.958);transform-origin:0 0">Träghe</span></div>
<div class="r" style="left:993px;top:0px;width:1px;height:19px;background:#000;"></div>
<div class="r" style="left:927px;top:0px;width:1px;height:18px;background:#FFF;"></div>
<div class="r" style="left:928px;top:0;width:65px;height:18px;overflow:hidden"><span class="t" style="left:2px;top:3.69px;transform:scaleX(1.0);transform-origin:0 0">Antriebsstra</span></div>
<div class="r" style="left:1105px;top:0px;width:1px;height:19px;background:#000;"></div>
<div class="r" style="left:994px;top:0px;width:1px;height:18px;background:#FFF;"></div>
<div class="r" style="left:995px;top:0;width:110px;height:18px;overflow:hidden"><span class="t" style="left:2px;top:3.69px;transform:scaleX(0.967);transform-origin:0 0">Rollendrehz.</span></div>
<div class="r" style="left:1215px;top:0px;width:1px;height:19px;background:#000;"></div>
<div class="r" style="left:1106px;top:0px;width:1px;height:18px;background:#FFF;"></div>
<div class="r" style="left:1107px;top:0;width:108px;height:18px;overflow:hidden"><span class="t" style="left:2px;top:3.69px;transform:scaleX(0.98);transform-origin:0 0">Motordrehz.</span></div>
<div class="r" style="left:1255px;top:0px;width:1px;height:19px;background:#000;"></div>
<div class="r" style="left:1216px;top:0px;width:1px;height:18px;background:#FFF;"></div>
<div class="r" style="left:1217px;top:0;width:38px;height:18px;overflow:hidden"><span class="t" style="left:2px;top:3.69px;transform:scaleX(0.944);transform-origin:0 0">Überse</span></div>
<div class="r" style="left:1295px;top:0px;width:1px;height:19px;background:#000;"></div>
<div class="r" style="left:1256px;top:0px;width:1px;height:18px;background:#FFF;"></div>
<div class="r" style="left:1257px;top:0;width:38px;height:18px;overflow:hidden"><span class="t" style="left:2px;top:3.69px;transform:scaleX(0.93);transform-origin:0 0">Übs.Fa</span></div>
<div class="r" style="left:1374px;top:0px;width:1px;height:19px;background:#000;"></div>
<div class="r" style="left:1296px;top:0px;width:1px;height:18px;background:#FFF;"></div>
<div class="r" style="left:1297px;top:0;width:77px;height:18px;overflow:hidden"><span class="t" style="left:2px;top:3.69px;transform:scaleX(0.996);transform-origin:0 0">Luftdichte</span></div>
<div class="r" style="left:1473px;top:0px;width:1px;height:19px;background:#000;"></div>
<div class="r" style="left:1375px;top:0px;width:1px;height:18px;background:#FFF;"></div>
<div class="r" style="left:1376px;top:0;width:97px;height:18px;overflow:hidden"><span class="t" style="left:2px;top:3.69px;transform:scaleX(0.978);transform-origin:0 0">Erweiterte Filterung</span></div>
<div class="r" style="left:1590px;top:0px;width:1px;height:19px;background:#000;"></div>
<div class="r" style="left:1474px;top:0px;width:1px;height:18px;background:#FFF;"></div>
<div class="r" style="left:1475px;top:0;width:115px;height:18px;overflow:hidden"><span class="t" style="left:2px;top:3.69px;transform:scaleX(0.972);transform-origin:0 0">Anzahl der Impulse (F1</span></div>
<div class="r" style="left:1653px;top:0px;width:1px;height:19px;background:#000;"></div>
<div class="r" style="left:1591px;top:0px;width:1px;height:18px;background:#FFF;"></div>
<div class="r" style="left:1592px;top:0;width:61px;height:18px;overflow:hidden"><span class="t" style="left:2px;top:3.69px;transform:scaleX(0.945);transform-origin:0 0">SW Datum</span></div>
<div class="r" style="left:1675px;top:0px;width:1px;height:19px;background:#000;"></div>
<div class="r" style="left:1654px;top:0px;width:1px;height:18px;background:#FFF;"></div>
<div class="r" style="left:1655px;top:0;width:20px;height:18px;overflow:hidden"><span class="t" style="left:2px;top:3.69px;transform:scaleX(0.9);transform-origin:0 0">SPx</span></div>
<div class="r" style="left:33px;top:19px;width:551px;height:18px;overflow:hidden"><span class="t" style="left:3px;top:3.89px;word-spacing:1.1px;transform:scaleX(0.915);transform-origin:0 0">SIMSON_MODEL_KS TUNING 85M__019 V3</span></div>
<div class="r" style="left:587px;top:19px;width:140px;height:18px;overflow:hidden"><span class="t" style="right:2.5px;top:3.89px;color:#FFF;transform:scaleX(0.985);transform-origin:100% 0">20.3 (23.8) / 12800</span></div>
<div class="r" style="left:728px;top:19px;width:158px;height:18px;overflow:hidden"><span class="t" style="right:2px;top:3.89px;color:#FFF;transform:scaleX(0.985);transform-origin:100% 0">13.08 / 12509</span></div>
<div class="r" style="left:887px;top:19px;width:37px;height:18px;overflow:hidden"><span class="t" style="left:6px;top:3.89px;transform:scaleX(1);transform-origin:0 0">0</span></div>
<div class="r" style="left:927px;top:19px;width:64px;height:18px;overflow:hidden"><span class="t" style="left:3px;top:3.89px;transform:scaleX(1);transform-origin:0 0">N</span></div>
<div class="r" style="left:994px;top:19px;width:111px;height:18px;overflow:hidden"><span class="t" style="right:2px;top:3.89px;transform:scaleX(0.985);transform-origin:100% 0">1593</span></div>
<div class="r" style="left:1106px;top:19px;width:109px;height:18px;overflow:hidden"><span class="t" style="right:2.5px;top:3.89px;transform:scaleX(0.985);transform-origin:100% 0">15172 / 15148</span></div>
<div class="r" style="left:1216px;top:19px;width:37px;height:18px;overflow:hidden"><span class="t" style="left:6px;top:3.89px;transform:scaleX(0.985);transform-origin:0 0">9.4754</span></div>
<div class="r" style="left:1256px;top:19px;width:37px;height:18px;overflow:hidden"><span class="t" style="left:6px;top:3.89px;transform:scaleX(0.985);transform-origin:0 0">9.52</span></div>
<div class="r" style="left:1296px;top:19px;width:78px;height:18px;overflow:hidden"><span class="t" style="right:2.5px;top:3.89px;transform:scaleX(0.985);transform-origin:100% 0">0.000</span></div>
<div class="r" style="left:1375px;top:19px;width:98px;height:18px;overflow:hidden"><span class="t" style="right:2.5px;top:3.89px;transform:scaleX(1);transform-origin:100% 0">0</span></div>
<div class="r" style="left:1474px;top:19px;width:114px;height:18px;overflow:hidden"><span class="t" style="left:6.5px;top:3.89px;transform:scaleX(1);transform-origin:0 0">40</span></div>
<div class="r" style="left:1594px;top:19px;width:57.6px;height:18px;overflow:hidden"><span class="t" style="right:0.2px;top:3.89px;transform:scaleX(0.95);transform-origin:100% 0">14-NOV-2019</span></div>
<div class="r" style="left:33px;top:38px;width:551px;height:18px;overflow:hidden"><span class="t" style="left:3px;top:3.89px;word-spacing:1.1px;transform:scaleX(0.915);transform-origin:0 0">SIMSON_MODEL_KS TUNING 85M__018 V3</span></div>
<div class="r" style="left:587px;top:38px;width:140px;height:18px;overflow:hidden"><span class="t" style="right:2.5px;top:3.89px;color:#FFF;transform:scaleX(0.985);transform-origin:100% 0">20.3 (23.9) / 13031</span></div>
<div class="r" style="left:728px;top:38px;width:158px;height:18px;overflow:hidden"><span class="t" style="right:2px;top:3.89px;color:#FFF;transform:scaleX(0.985);transform-origin:100% 0">13.03 / 12629</span></div>
<div class="r" style="left:887px;top:38px;width:37px;height:18px;overflow:hidden"><span class="t" style="left:6px;top:3.89px;transform:scaleX(1);transform-origin:0 0">0</span></div>
<div class="r" style="left:927px;top:38px;width:64px;height:18px;overflow:hidden"><span class="t" style="left:3px;top:3.89px;transform:scaleX(1);transform-origin:0 0">N</span></div>
<div class="r" style="left:994px;top:38px;width:111px;height:18px;overflow:hidden"><span class="t" style="right:2px;top:3.89px;transform:scaleX(0.985);transform-origin:100% 0">1600</span></div>
<div class="r" style="left:1106px;top:38px;width:109px;height:18px;overflow:hidden"><span class="t" style="right:2.5px;top:3.89px;transform:scaleX(0.985);transform-origin:100% 0">15235 / 15214</span></div>
<div class="r" style="left:1216px;top:38px;width:37px;height:18px;overflow:hidden"><span class="t" style="left:6px;top:3.89px;transform:scaleX(0.985);transform-origin:0 0">9.4896</span></div>
<div class="r" style="left:1256px;top:38px;width:37px;height:18px;overflow:hidden"><span class="t" style="left:6px;top:3.89px;transform:scaleX(0.985);transform-origin:0 0">9.53</span></div>
<div class="r" style="left:1296px;top:38px;width:78px;height:18px;overflow:hidden"><span class="t" style="right:2.5px;top:3.89px;transform:scaleX(0.985);transform-origin:100% 0">0.000</span></div>
<div class="r" style="left:1375px;top:38px;width:98px;height:18px;overflow:hidden"><span class="t" style="right:2.5px;top:3.89px;transform:scaleX(1);transform-origin:100% 0">0</span></div>
<div class="r" style="left:1474px;top:38px;width:114px;height:18px;overflow:hidden"><span class="t" style="left:6.5px;top:3.89px;transform:scaleX(1);transform-origin:0 0">40</span></div>
<div class="r" style="left:1594px;top:38px;width:57.6px;height:18px;overflow:hidden"><span class="t" style="right:0.2px;top:3.89px;transform:scaleX(0.95);transform-origin:100% 0">14-NOV-2019</span></div>
<div class="r" style="left:33px;top:57px;width:551px;height:18px;overflow:hidden"><span class="t" style="left:3px;top:3.89px;word-spacing:1.1px;transform:scaleX(0.915);transform-origin:0 0">SIMSON_MODEL_KS TUNING 85M__017</span></div>
<div class="r" style="left:587px;top:57px;width:140px;height:18px;overflow:hidden"><span class="t" style="right:2.5px;top:3.89px;color:#FFF;transform:scaleX(0.985);transform-origin:100% 0">19.9 (23.8) / 12916</span></div>
<div class="r" style="left:728px;top:57px;width:158px;height:18px;overflow:hidden"><span class="t" style="right:2px;top:3.89px;color:#FFF;transform:scaleX(0.985);transform-origin:100% 0">13.09 / 12666</span></div>
<div class="r" style="left:887px;top:57px;width:37px;height:18px;overflow:hidden"><span class="t" style="left:6px;top:3.89px;transform:scaleX(1);transform-origin:0 0">0</span></div>
<div class="r" style="left:927px;top:57px;width:64px;height:18px;overflow:hidden"><span class="t" style="left:3px;top:3.89px;transform:scaleX(1);transform-origin:0 0">N</span></div>
<div class="r" style="left:994px;top:57px;width:111px;height:18px;overflow:hidden"><span class="t" style="right:2px;top:3.89px;transform:scaleX(0.985);transform-origin:100% 0">1576</span></div>
<div class="r" style="left:1106px;top:57px;width:109px;height:18px;overflow:hidden"><span class="t" style="right:2.5px;top:3.89px;transform:scaleX(0.985);transform-origin:100% 0">15262 / 15035</span></div>
<div class="r" style="left:1216px;top:57px;width:37px;height:18px;overflow:hidden"><span class="t" style="left:6px;top:3.89px;transform:scaleX(0.985);transform-origin:0 0">9.5013</span></div>
<div class="r" style="left:1256px;top:57px;width:37px;height:18px;overflow:hidden"><span class="t" style="left:6px;top:3.89px;transform:scaleX(0.985);transform-origin:0 0">9.54</span></div>
<div class="r" style="left:1296px;top:57px;width:78px;height:18px;overflow:hidden"><span class="t" style="right:2.5px;top:3.89px;transform:scaleX(0.985);transform-origin:100% 0">0.000</span></div>
<div class="r" style="left:1375px;top:57px;width:98px;height:18px;overflow:hidden"><span class="t" style="right:2.5px;top:3.89px;transform:scaleX(1);transform-origin:100% 0">0</span></div>
<div class="r" style="left:1474px;top:57px;width:114px;height:18px;overflow:hidden"><span class="t" style="left:6.5px;top:3.89px;transform:scaleX(1);transform-origin:0 0">40</span></div>
<div class="r" style="left:1594px;top:57px;width:57.6px;height:18px;overflow:hidden"><span class="t" style="right:0.2px;top:3.89px;transform:scaleX(0.95);transform-origin:100% 0">14-NOV-2019</span></div>
<div class="r" style="left:33px;top:76px;width:551px;height:18px;overflow:hidden"><span class="t" style="left:3px;top:3.89px;word-spacing:1.1px;transform:scaleX(0.915);transform-origin:0 0">SIMSON_MODEL_KS TUNING 85M__016HYDRO</span></div>
<div class="r" style="left:587px;top:76px;width:140px;height:18px;overflow:hidden"><span class="t" style="right:2.5px;top:3.89px;color:#FFF;transform:scaleX(0.985);transform-origin:100% 0">20.3 (23.1) / 11504</span></div>
<div class="r" style="left:728px;top:76px;width:158px;height:18px;overflow:hidden"><span class="t" style="right:2px;top:3.89px;color:#FFF;transform:scaleX(0.985);transform-origin:100% 0">14.26 / 11235</span></div>
<div class="r" style="left:887px;top:76px;width:37px;height:18px;overflow:hidden"><span class="t" style="left:6px;top:3.89px;transform:scaleX(1);transform-origin:0 0">0</span></div>
<div class="r" style="left:927px;top:76px;width:64px;height:18px;overflow:hidden"><span class="t" style="left:3px;top:3.89px;transform:scaleX(1);transform-origin:0 0">N</span></div>
<div class="r" style="left:994px;top:76px;width:111px;height:18px;overflow:hidden"><span class="t" style="right:2px;top:3.89px;transform:scaleX(0.985);transform-origin:100% 0">1401</span></div>
<div class="r" style="left:1106px;top:76px;width:109px;height:18px;overflow:hidden"><span class="t" style="right:2.5px;top:3.89px;transform:scaleX(0.985);transform-origin:100% 0">13309 / 13359</span></div>
<div class="r" style="left:1216px;top:76px;width:37px;height:18px;overflow:hidden"><span class="t" style="left:6px;top:3.89px;transform:scaleX(0.985);transform-origin:0 0">9.5098</span></div>
<div class="r" style="left:1256px;top:76px;width:37px;height:18px;overflow:hidden"><span class="t" style="left:6px;top:3.89px;transform:scaleX(0.985);transform-origin:0 0">9.49</span></div>
<div class="r" style="left:1296px;top:76px;width:78px;height:18px;overflow:hidden"><span class="t" style="right:2.5px;top:3.89px;transform:scaleX(0.985);transform-origin:100% 0">0.000</span></div>
<div class="r" style="left:1375px;top:76px;width:98px;height:18px;overflow:hidden"><span class="t" style="right:2.5px;top:3.89px;transform:scaleX(1);transform-origin:100% 0">0</span></div>
<div class="r" style="left:1474px;top:76px;width:114px;height:18px;overflow:hidden"><span class="t" style="left:6.5px;top:3.89px;transform:scaleX(1);transform-origin:0 0">40</span></div>
<div class="r" style="left:1594px;top:76px;width:57.6px;height:18px;overflow:hidden"><span class="t" style="right:0.2px;top:3.89px;transform:scaleX(0.95);transform-origin:100% 0">14-NOV-2019</span></div>
<div class="r" style="left:33px;top:95px;width:551px;height:18px;overflow:hidden"><span class="t" style="left:3px;top:3.89px;word-spacing:1.1px;transform:scaleX(0.915);transform-origin:0 0">SIMSON_MODEL_KS TUNING 85M__015</span></div>
<div class="r" style="left:587px;top:95px;width:140px;height:18px;overflow:hidden"><span class="t" style="right:2.5px;top:3.89px;color:#FFF;transform:scaleX(0.985);transform-origin:100% 0">20.6 (23.5) / 11357</span></div>
<div class="r" style="left:728px;top:95px;width:158px;height:18px;overflow:hidden"><span class="t" style="right:2px;top:3.89px;color:#FFF;transform:scaleX(0.985);transform-origin:100% 0">14.63 / 11231</span></div>
<div class="r" style="left:887px;top:95px;width:37px;height:18px;overflow:hidden"><span class="t" style="left:6px;top:3.89px;transform:scaleX(1);transform-origin:0 0">0</span></div>
<div class="r" style="left:927px;top:95px;width:64px;height:18px;overflow:hidden"><span class="t" style="left:3px;top:3.89px;transform:scaleX(1);transform-origin:0 0">N</span></div>
<div class="r" style="left:994px;top:95px;width:111px;height:18px;overflow:hidden"><span class="t" style="right:2px;top:3.89px;transform:scaleX(0.985);transform-origin:100% 0">1440</span></div>
<div class="r" style="left:1106px;top:95px;width:109px;height:18px;overflow:hidden"><span class="t" style="right:2.5px;top:3.89px;transform:scaleX(0.985);transform-origin:100% 0">13967 / 13713</span></div>
<div class="r" style="left:1216px;top:95px;width:37px;height:18px;overflow:hidden"><span class="t" style="left:6px;top:3.89px;transform:scaleX(0.985);transform-origin:0 0">9.5135</span></div>
<div class="r" style="left:1256px;top:95px;width:37px;height:18px;overflow:hidden"><span class="t" style="left:6px;top:3.89px;transform:scaleX(0.985);transform-origin:0 0">9.5</span></div>
<div class="r" style="left:1296px;top:95px;width:78px;height:18px;overflow:hidden"><span class="t" style="right:2.5px;top:3.89px;transform:scaleX(0.985);transform-origin:100% 0">0.000</span></div>
<div class="r" style="left:1375px;top:95px;width:98px;height:18px;overflow:hidden"><span class="t" style="right:2.5px;top:3.89px;transform:scaleX(1);transform-origin:100% 0">0</span></div>
<div class="r" style="left:1474px;top:95px;width:114px;height:18px;overflow:hidden"><span class="t" style="left:6.5px;top:3.89px;transform:scaleX(1);transform-origin:0 0">40</span></div>
<div class="r" style="left:1594px;top:95px;width:57.6px;height:18px;overflow:hidden"><span class="t" style="right:0.2px;top:3.89px;transform:scaleX(0.95);transform-origin:100% 0">14-NOV-2019</span></div>
<div class="r" style="left:33px;top:114px;width:551px;height:18px;overflow:hidden"><span class="t" style="left:3px;top:3.89px;word-spacing:1.1px;transform:scaleX(0.915);transform-origin:0 0">SIMSON_MODEL_KS TUNING 85M__014HYDR0</span></div>
<div class="r" style="left:587px;top:114px;width:140px;height:18px;overflow:hidden"><span class="t" style="right:2.5px;top:3.89px;color:#FFF;transform:scaleX(0.985);transform-origin:100% 0">20.3 (23.0) / 11224</span></div>
<div class="r" style="left:728px;top:114px;width:158px;height:18px;overflow:hidden"><span class="t" style="right:2px;top:3.89px;color:#FFF;transform:scaleX(0.985);transform-origin:100% 0">14.60 / 10807</span></div>
<div class="r" style="left:887px;top:114px;width:37px;height:18px;overflow:hidden"><span class="t" style="left:6px;top:3.89px;transform:scaleX(1);transform-origin:0 0">0</span></div>
<div class="r" style="left:927px;top:114px;width:64px;height:18px;overflow:hidden"><span class="t" style="left:3px;top:3.89px;transform:scaleX(1);transform-origin:0 0">N</span></div>
<div class="r" style="left:994px;top:114px;width:111px;height:18px;overflow:hidden"><span class="t" style="right:2px;top:3.89px;transform:scaleX(0.985);transform-origin:100% 0">1350</span></div>
<div class="r" style="left:1106px;top:114px;width:109px;height:18px;overflow:hidden"><span class="t" style="right:2.5px;top:3.89px;transform:scaleX(0.985);transform-origin:100% 0">12716 / 12916</span></div>
<div class="r" style="left:1216px;top:114px;width:37px;height:18px;overflow:hidden"><span class="t" style="left:6px;top:3.89px;transform:scaleX(0.985);transform-origin:0 0">9.5445</span></div>
<div class="r" style="left:1256px;top:114px;width:37px;height:18px;overflow:hidden"><span class="t" style="left:6px;top:3.89px;transform:scaleX(0.985);transform-origin:0 0">9.52</span></div>
<div class="r" style="left:1296px;top:114px;width:78px;height:18px;overflow:hidden"><span class="t" style="right:2.5px;top:3.89px;transform:scaleX(0.985);transform-origin:100% 0">0.000</span></div>
<div class="r" style="left:1375px;top:114px;width:98px;height:18px;overflow:hidden"><span class="t" style="right:2.5px;top:3.89px;transform:scaleX(1);transform-origin:100% 0">0</span></div>
<div class="r" style="left:1474px;top:114px;width:114px;height:18px;overflow:hidden"><span class="t" style="left:6.5px;top:3.89px;transform:scaleX(1);transform-origin:0 0">40</span></div>
<div class="r" style="left:1594px;top:114px;width:57.6px;height:18px;overflow:hidden"><span class="t" style="right:0.2px;top:3.89px;transform:scaleX(0.95);transform-origin:100% 0">14-NOV-2019</span></div>
<div class="r" style="left:33px;top:133px;width:551px;height:18px;overflow:hidden"><span class="t" style="left:3px;top:3.89px;word-spacing:1.1px;transform:scaleX(0.915);transform-origin:0 0">SIMSON_MODEL_KS TUNING 85M__013 F1</span></div>
<div class="r" style="left:587px;top:133px;width:140px;height:18px;overflow:hidden"><span class="t" style="right:2.5px;top:3.89px;color:#FFF;transform:scaleX(0.985);transform-origin:100% 0">20.3 (23.1) / 11276</span></div>
<div class="r" style="left:728px;top:133px;width:158px;height:18px;overflow:hidden"><span class="t" style="right:2px;top:3.89px;color:#FFF;transform:scaleX(0.985);transform-origin:100% 0">14.44 / 10993</span></div>
<div class="r" style="left:887px;top:133px;width:37px;height:18px;overflow:hidden"><span class="t" style="left:6px;top:3.89px;transform:scaleX(1);transform-origin:0 0">0</span></div>
<div class="r" style="left:927px;top:133px;width:64px;height:18px;overflow:hidden"><span class="t" style="left:3px;top:3.89px;transform:scaleX(1);transform-origin:0 0">N</span></div>
<div class="r" style="left:994px;top:133px;width:111px;height:18px;overflow:hidden"><span class="t" style="right:2px;top:3.89px;transform:scaleX(0.985);transform-origin:100% 0">1413</span></div>
<div class="r" style="left:1106px;top:133px;width:109px;height:18px;overflow:hidden"><span class="t" style="right:2.5px;top:3.89px;transform:scaleX(0.985);transform-origin:100% 0">13238 / 13476</span></div>
<div class="r" style="left:1216px;top:133px;width:37px;height:18px;overflow:hidden"><span class="t" style="left:6px;top:3.89px;transform:scaleX(0.985);transform-origin:0 0">9.5235</span></div>
<div class="r" style="left:1256px;top:133px;width:37px;height:18px;overflow:hidden"><span class="t" style="left:6px;top:3.89px;transform:scaleX(0.985);transform-origin:0 0">9.59</span></div>
<div class="r" style="left:1296px;top:133px;width:78px;height:18px;overflow:hidden"><span class="t" style="right:2.5px;top:3.89px;transform:scaleX(0.985);transform-origin:100% 0">0.000</span></div>
<div class="r" style="left:1375px;top:133px;width:98px;height:18px;overflow:hidden"><span class="t" style="right:2.5px;top:3.89px;transform:scaleX(1);transform-origin:100% 0">0</span></div>
<div class="r" style="left:1474px;top:133px;width:114px;height:18px;overflow:hidden"><span class="t" style="left:6.5px;top:3.89px;transform:scaleX(1);transform-origin:0 0">40</span></div>
<div class="r" style="left:1594px;top:133px;width:57.6px;height:18px;overflow:hidden"><span class="t" style="right:0.2px;top:3.89px;transform:scaleX(0.95);transform-origin:100% 0">14-NOV-2019</span></div>
<div class="r" style="left:33px;top:152px;width:551px;height:18px;overflow:hidden"><span class="t" style="left:3px;top:3.89px;word-spacing:1.1px;transform:scaleX(0.915);transform-origin:0 0">SIMSON_MODEL_KS TUNING 85M__012</span></div>
<div class="r" style="left:587px;top:152px;width:140px;height:18px;overflow:hidden"><span class="t" style="right:2.5px;top:3.89px;color:#FFF;transform:scaleX(0.985);transform-origin:100% 0">20.7 (23.4) / 11163</span></div>
<div class="r" style="left:728px;top:152px;width:158px;height:18px;overflow:hidden"><span class="t" style="right:2px;top:3.89px;color:#FFF;transform:scaleX(0.985);transform-origin:100% 0">14.82 / 11100</span></div>
<div class="r" style="left:887px;top:152px;width:37px;height:18px;overflow:hidden"><span class="t" style="left:6px;top:3.89px;transform:scaleX(1);transform-origin:0 0">0</span></div>
<div class="r" style="left:927px;top:152px;width:64px;height:18px;overflow:hidden"><span class="t" style="left:3px;top:3.89px;transform:scaleX(1);transform-origin:0 0">N</span></div>
<div class="r" style="left:994px;top:152px;width:111px;height:18px;overflow:hidden"><span class="t" style="right:2px;top:3.89px;transform:scaleX(0.985);transform-origin:100% 0">1421</span></div>
<div class="r" style="left:1106px;top:152px;width:109px;height:18px;overflow:hidden"><span class="t" style="right:2.5px;top:3.89px;transform:scaleX(0.985);transform-origin:100% 0">13794 / 13547</span></div>
<div class="r" style="left:1216px;top:152px;width:37px;height:18px;overflow:hidden"><span class="t" style="left:6px;top:3.89px;transform:scaleX(0.985);transform-origin:0 0">9.5271</span></div>
<div class="r" style="left:1256px;top:152px;width:37px;height:18px;overflow:hidden"><span class="t" style="left:6px;top:3.89px;transform:scaleX(0.985);transform-origin:0 0">9.59</span></div>
<div class="r" style="left:1296px;top:152px;width:78px;height:18px;overflow:hidden"><span class="t" style="right:2.5px;top:3.89px;transform:scaleX(0.985);transform-origin:100% 0">0.000</span></div>
<div class="r" style="left:1375px;top:152px;width:98px;height:18px;overflow:hidden"><span class="t" style="right:2.5px;top:3.89px;transform:scaleX(1);transform-origin:100% 0">0</span></div>
<div class="r" style="left:1474px;top:152px;width:114px;height:18px;overflow:hidden"><span class="t" style="left:6.5px;top:3.89px;transform:scaleX(1);transform-origin:0 0">40</span></div>
<div class="r" style="left:1594px;top:152px;width:57.6px;height:18px;overflow:hidden"><span class="t" style="right:0.2px;top:3.89px;transform:scaleX(0.95);transform-origin:100% 0">14-NOV-2019</span></div>
<div class="r" style="left:33px;top:171px;width:551px;height:18px;overflow:hidden"><span class="t" style="left:3px;top:3.89px;word-spacing:1.1px;transform:scaleX(0.915);transform-origin:0 0">SIMSON_MODEL_KS TUNING 85M__011 F1</span></div>
<div class="r" style="left:587px;top:171px;width:140px;height:18px;overflow:hidden"><span class="t" style="right:2.5px;top:3.89px;color:#FFF;transform:scaleX(0.985);transform-origin:100% 0">20.9 (23.8) / 11047</span></div>
<div class="r" style="left:728px;top:171px;width:158px;height:18px;overflow:hidden"><span class="t" style="right:2px;top:3.89px;color:#FFF;transform:scaleX(0.985);transform-origin:100% 0">15.28 / 10748</span></div>
<div class="r" style="left:887px;top:171px;width:37px;height:18px;overflow:hidden"><span class="t" style="left:6px;top:3.89px;transform:scaleX(1);transform-origin:0 0">0</span></div>
<div class="r" style="left:927px;top:171px;width:64px;height:18px;overflow:hidden"><span class="t" style="left:3px;top:3.89px;transform:scaleX(1);transform-origin:0 0">N</span></div>
<div class="r" style="left:994px;top:171px;width:111px;height:18px;overflow:hidden"><span class="t" style="right:2px;top:3.89px;transform:scaleX(0.985);transform-origin:100% 0">1383</span></div>
<div class="r" style="left:1106px;top:171px;width:109px;height:18px;overflow:hidden"><span class="t" style="right:2.5px;top:3.89px;transform:scaleX(0.985);transform-origin:100% 0">13364 / 13229</span></div>
<div class="r" style="left:1216px;top:171px;width:37px;height:18px;overflow:hidden"><span class="t" style="left:6px;top:3.89px;transform:scaleX(0.985);transform-origin:0 0">9.5493</span></div>
<div class="r" style="left:1256px;top:171px;width:37px;height:18px;overflow:hidden"><span class="t" style="left:6px;top:3.89px;transform:scaleX(0.985);transform-origin:0 0">9.63</span></div>
<div class="r" style="left:1296px;top:171px;width:78px;height:18px;overflow:hidden"><span class="t" style="right:2.5px;top:3.89px;transform:scaleX(0.985);transform-origin:100% 0">0.000</span></div>
<div class="r" style="left:1375px;top:171px;width:98px;height:18px;overflow:hidden"><span class="t" style="right:2.5px;top:3.89px;transform:scaleX(1);transform-origin:100% 0">0</span></div>
<div class="r" style="left:1474px;top:171px;width:114px;height:18px;overflow:hidden"><span class="t" style="left:6.5px;top:3.89px;transform:scaleX(1);transform-origin:0 0">40</span></div>
<div class="r" style="left:1594px;top:171px;width:57.6px;height:18px;overflow:hidden"><span class="t" style="right:0.2px;top:3.89px;transform:scaleX(0.95);transform-origin:100% 0">14-NOV-2019</span></div>
<div class="r" style="left:33px;top:190px;width:551px;height:18px;overflow:hidden"><span class="t" style="left:3px;top:3.89px;word-spacing:1.1px;transform:scaleX(0.915);transform-origin:0 0">SIMSON_MODEL_KS TUNING 85M__010 LTM NACHBAU</span></div>
<div class="r" style="left:587px;top:190px;width:140px;height:18px;overflow:hidden"><span class="t" style="right:2.5px;top:3.89px;color:#FFF;transform:scaleX(0.985);transform-origin:100% 0">15.6 (17.9) / 9177</span></div>
<div class="r" style="left:728px;top:190px;width:158px;height:18px;overflow:hidden"><span class="t" style="right:2px;top:3.89px;color:#FFF;transform:scaleX(0.985);transform-origin:100% 0">13.78 / 8977</span></div>
<div class="r" style="left:887px;top:190px;width:37px;height:18px;overflow:hidden"><span class="t" style="left:6px;top:3.89px;transform:scaleX(1);transform-origin:0 0">0</span></div>
<div class="r" style="left:927px;top:190px;width:64px;height:18px;overflow:hidden"><span class="t" style="left:3px;top:3.89px;transform:scaleX(1);transform-origin:0 0">N</span></div>
<div class="r" style="left:994px;top:190px;width:111px;height:18px;overflow:hidden"><span class="t" style="right:2px;top:3.89px;transform:scaleX(0.985);transform-origin:100% 0">1198</span></div>
<div class="r" style="left:1106px;top:190px;width:109px;height:18px;overflow:hidden"><span class="t" style="right:2.5px;top:3.89px;transform:scaleX(0.985);transform-origin:100% 0">11443 / 11508</span></div>
<div class="r" style="left:1216px;top:190px;width:37px;height:18px;overflow:hidden"><span class="t" style="left:6px;top:3.89px;transform:scaleX(0.985);transform-origin:0 0">9.5634</span></div>
<div class="r" style="left:1256px;top:190px;width:37px;height:18px;overflow:hidden"><span class="t" style="left:6px;top:3.89px;transform:scaleX(0.985);transform-origin:0 0">9.47</span></div>
<div class="r" style="left:1296px;top:190px;width:78px;height:18px;overflow:hidden"><span class="t" style="right:2.5px;top:3.89px;transform:scaleX(0.985);transform-origin:100% 0">0.000</span></div>
<div class="r" style="left:1375px;top:190px;width:98px;height:18px;overflow:hidden"><span class="t" style="right:2.5px;top:3.89px;transform:scaleX(1);transform-origin:100% 0">0</span></div>
<div class="r" style="left:1474px;top:190px;width:114px;height:18px;overflow:hidden"><span class="t" style="left:6.5px;top:3.89px;transform:scaleX(1);transform-origin:0 0">40</span></div>
<div class="r" style="left:1594px;top:190px;width:57.6px;height:18px;overflow:hidden"><span class="t" style="right:0.2px;top:3.89px;transform:scaleX(0.95);transform-origin:100% 0">14-NOV-2019</span></div>
<div class="r" style="left:33px;top:209px;width:551px;height:18px;overflow:hidden"><span class="t" style="left:3px;top:3.89px;word-spacing:1.1px;transform:scaleX(0.915);transform-origin:0 0">SIMSON_MODEL_KS TUNING 85M__009 LTM NACHBAU</span></div>
<div class="r" style="left:587px;top:209px;width:140px;height:18px;overflow:hidden"><span class="t" style="right:2.5px;top:3.89px;color:#FFF;transform:scaleX(0.985);transform-origin:100% 0">15.7 (18.1) / 8938</span></div>
<div class="r" style="left:728px;top:209px;width:158px;height:18px;overflow:hidden"><span class="t" style="right:2px;top:3.89px;color:#FFF;transform:scaleX(0.985);transform-origin:100% 0">14.29 / 8821</span></div>
<div class="r" style="left:887px;top:209px;width:37px;height:18px;overflow:hidden"><span class="t" style="left:6px;top:3.89px;transform:scaleX(1);transform-origin:0 0">0</span></div>
<div class="r" style="left:927px;top:209px;width:64px;height:18px;overflow:hidden"><span class="t" style="left:3px;top:3.89px;transform:scaleX(1);transform-origin:0 0">N</span></div>
<div class="r" style="left:994px;top:209px;width:111px;height:18px;overflow:hidden"><span class="t" style="right:2px;top:3.89px;transform:scaleX(0.985);transform-origin:100% 0">1194</span></div>
<div class="r" style="left:1106px;top:209px;width:109px;height:18px;overflow:hidden"><span class="t" style="right:2.5px;top:3.89px;transform:scaleX(0.985);transform-origin:100% 0">11325 / 11447</span></div>
<div class="r" style="left:1216px;top:209px;width:37px;height:18px;overflow:hidden"><span class="t" style="left:6px;top:3.89px;transform:scaleX(0.985);transform-origin:0 0">9.5694</span></div>
<div class="r" style="left:1256px;top:209px;width:37px;height:18px;overflow:hidden"><span class="t" style="left:6px;top:3.89px;transform:scaleX(0.985);transform-origin:0 0">9.48</span></div>
<div class="r" style="left:1296px;top:209px;width:78px;height:18px;overflow:hidden"><span class="t" style="right:2.5px;top:3.89px;transform:scaleX(0.985);transform-origin:100% 0">0.000</span></div>
<div class="r" style="left:1375px;top:209px;width:98px;height:18px;overflow:hidden"><span class="t" style="right:2.5px;top:3.89px;transform:scaleX(1);transform-origin:100% 0">0</span></div>
<div class="r" style="left:1474px;top:209px;width:114px;height:18px;overflow:hidden"><span class="t" style="left:6.5px;top:3.89px;transform:scaleX(1);transform-origin:0 0">40</span></div>
<div class="r" style="left:1594px;top:209px;width:57.6px;height:18px;overflow:hidden"><span class="t" style="right:0.2px;top:3.89px;transform:scaleX(0.95);transform-origin:100% 0">14-NOV-2019</span></div>
<div class="r" style="left:33px;top:228px;width:551px;height:18px;overflow:hidden"><span class="t" style="left:3px;top:3.89px;word-spacing:1.1px;transform:scaleX(0.915);transform-origin:0 0">SIMSON_MODEL_KS TUNING 85M__008 JACKMOTORS LTM</span></div>
<div class="r" style="left:587px;top:228px;width:140px;height:18px;overflow:hidden"><span class="t" style="right:2.5px;top:3.89px;color:#FFF;transform:scaleX(0.985);transform-origin:100% 0">18.7 (21.2) / 10381</span></div>
<div class="r" style="left:728px;top:228px;width:158px;height:18px;overflow:hidden"><span class="t" style="right:2px;top:3.89px;color:#FFF;transform:scaleX(0.985);transform-origin:100% 0">14.53 / 10182</span></div>
<div class="r" style="left:887px;top:228px;width:37px;height:18px;overflow:hidden"><span class="t" style="left:6px;top:3.89px;transform:scaleX(1);transform-origin:0 0">0</span></div>
<div class="r" style="left:927px;top:228px;width:64px;height:18px;overflow:hidden"><span class="t" style="left:3px;top:3.89px;transform:scaleX(1);transform-origin:0 0">N</span></div>
<div class="r" style="left:994px;top:228px;width:111px;height:18px;overflow:hidden"><span class="t" style="right:2px;top:3.89px;transform:scaleX(0.985);transform-origin:100% 0">1391</span></div>
<div class="r" style="left:1106px;top:228px;width:109px;height:18px;overflow:hidden"><span class="t" style="right:2.5px;top:3.89px;transform:scaleX(0.985);transform-origin:100% 0">13162 / 13288</span></div>
<div class="r" style="left:1216px;top:228px;width:37px;height:18px;overflow:hidden"><span class="t" style="left:6px;top:3.89px;transform:scaleX(0.985);transform-origin:0 0">9.5243</span></div>
<div class="r" style="left:1256px;top:228px;width:37px;height:18px;overflow:hidden"><span class="t" style="left:6px;top:3.89px;transform:scaleX(0.985);transform-origin:0 0">9.44</span></div>
<div class="r" style="left:1296px;top:228px;width:78px;height:18px;overflow:hidden"><span class="t" style="right:2.5px;top:3.89px;transform:scaleX(0.985);transform-origin:100% 0">0.000</span></div>
<div class="r" style="left:1375px;top:228px;width:98px;height:18px;overflow:hidden"><span class="t" style="right:2.5px;top:3.89px;transform:scaleX(1);transform-origin:100% 0">0</span></div>
<div class="r" style="left:1474px;top:228px;width:114px;height:18px;overflow:hidden"><span class="t" style="left:6.5px;top:3.89px;transform:scaleX(1);transform-origin:0 0">40</span></div>
<div class="r" style="left:1594px;top:228px;width:57.6px;height:18px;overflow:hidden"><span class="t" style="right:0.2px;top:3.89px;transform:scaleX(0.95);transform-origin:100% 0">14-NOV-2019</span></div>
<div class="r" style="left:0px;top:95px;width:16px;height:16px;background:#FFFFFF;"></div>
<svg style="left:0;top:95px" width="17" height="18" viewBox="225 188 17 18"><path d="M225.3 195.2C227.5 195 229.5 196.5 231.3 199.6C234 195 237.5 191.5 241 189C237.8 192.8 234.5 197.5 232.2 202.6C231.6 203 230.8 202.8 230.4 202.2C229.2 199.6 227.6 197.2 225.3 195.2Z" fill="#2626CC" stroke="#14146C" stroke-width="0.6"/></svg>
<div class="r" style="left:0px;top:171px;width:16px;height:16px;background:#FFFFFF;"></div>
<svg style="left:0;top:171px" width="17" height="18" viewBox="225 188 17 18"><path d="M225.3 195.2C227.5 195 229.5 196.5 231.3 199.6C234 195 237.5 191.5 241 189C237.8 192.8 234.5 197.5 232.2 202.6C231.6 203 230.8 202.8 230.4 202.2C229.2 199.6 227.6 197.2 225.3 195.2Z" fill="#2626CC" stroke="#14146C" stroke-width="0.6"/></svg>
</div>
<div class="r" style="left:1900px;top:93px;width:17px;height:237px;background:repeating-conic-gradient(#FFFFFF 0% 25%, #F0F0F0 0% 50%) 0 0/2px 2px;"></div>
<div class="r" style="left:1900px;top:93px;width:17px;height:17px;background:#F0F0F0;border:1px solid #fff;border-right-color:#696969;border-bottom-color:#696969;box-shadow:inset -1px -1px 0 #A0A0A0;"></div>
<div class="r" style="left:1900px;top:196px;width:17px;height:17px;background:#F0F0F0;border:1px solid #fff;border-right-color:#696969;border-bottom-color:#696969;box-shadow:inset -1px -1px 0 #A0A0A0;"></div>
<div class="r" style="left:1900px;top:313px;width:17px;height:17px;background:#F0F0F0;border:1px solid #fff;border-right-color:#696969;border-bottom-color:#696969;box-shadow:inset -1px -1px 0 #A0A0A0;"></div>
<svg style="left:1904px;top:99px" width="8" height="4" viewBox="0 0 8 4"><path d="M0 4h8l-4-4z" fill="#000"/></svg>
<svg style="left:1904px;top:320px" width="8" height="4" viewBox="0 0 8 4"><path d="M0 0h8l-4 4z" fill="#000"/></svg>
<div class="r" style="left:225px;top:330px;width:1675px;height:17px;background:repeating-conic-gradient(#FFFFFF 0% 25%, #F0F0F0 0% 50%) 0 0/2px 2px;"></div>
<div class="r" style="left:225px;top:330px;width:16px;height:17px;background:#F0F0F0;border:1px solid #fff;border-right-color:#696969;border-bottom-color:#696969;box-shadow:inset -1px -1px 0 #A0A0A0;"></div>
<div class="r" style="left:241px;top:330px;width:17px;height:17px;background:#F0F0F0;border:1px solid #fff;border-right-color:#696969;border-bottom-color:#696969;box-shadow:inset -1px -1px 0 #A0A0A0;"></div>
<div class="r" style="left:1883px;top:330px;width:17px;height:17px;background:#F0F0F0;border:1px solid #fff;border-right-color:#696969;border-bottom-color:#696969;box-shadow:inset -1px -1px 0 #A0A0A0;"></div>
<div class="r" style="left:1900px;top:330px;width:17px;height:17px;background:#F0F0F0;"></div>
<svg style="left:230px;top:334px" width="4" height="8" viewBox="0 0 4 8"><path d="M4 0v8l-4-4z" fill="#000"/></svg>
<svg style="left:1889px;top:334px" width="4" height="8" viewBox="0 0 4 8"><path d="M0 0v8l4-4z" fill="#000"/></svg>
<div class="r" style="left:4px;top:377px;width:1912px;height:1px;background:#FFFFFF;"></div>
<div class="r" style="left:6px;top:358px;width:66px;height:19px;background:#F0F0FF;border-top:1px solid #fff;border-left:1px solid #fff;border-right:2px solid #696969;"></div>
<div class="r" style="left:74px;top:358px;width:72px;height:19px;background:#F0F0FF;border-top:1px solid #fff;border-left:1px solid #fff;border-right:1px solid #E0E0E8;"></div>
<div class="r" style="left:146px;top:356px;width:96px;height:22px;background:#F0F0FF;border-top:1px solid #fff;border-left:1px solid #fff;border-right:2px solid #696969;"></div>
<span class="t" style="top:361.99px;font-size:11px;left:11px;transform:scaleX(0.9956);transform-origin:0 0;">Kurven Zeit</span>
<span class="t" style="top:361.99px;font-size:11px;left:79px;transform:scaleX(0.9749);transform-origin:0 0;">Kurven Km/h</span>
<span class="t" style="top:359.99px;font-size:11px;left:153px;transform:scaleX(0.9947);transform-origin:0 0;">Kurven Drehzahl</span>
<svg style="left:0;top:0" width="1920" height="1080" viewBox="0 0 1920 1080">
<g shape-rendering="crispEdges">
<rect x="2" y="382" width="1915" height="676" fill="#FFFFFF"/>
<rect x="45" y="382" width="1871" height="99" fill="#EFEFEF"/>
<rect x="45" y="588" width="1871" height="106" fill="#EFEFEF"/>
<rect x="45" y="800" width="1871" height="105" fill="#EFEFEF"/>
<rect x="264" y="382" width="1" height="676" fill="#CBCBCB"/>
<rect x="496" y="382" width="1" height="676" fill="#CBCBCB"/>
<rect x="727" y="382" width="1" height="676" fill="#CBCBCB"/>
<rect x="959" y="382" width="1" height="676" fill="#CBCBCB"/>
<rect x="1190" y="382" width="1" height="676" fill="#CBCBCB"/>
<rect x="1422" y="382" width="1" height="676" fill="#CBCBCB"/>
<rect x="1654" y="382" width="1" height="676" fill="#CBCBCB"/>
<rect x="1885" y="382" width="1" height="676" fill="#CBCBCB"/>
<rect x="45" y="906" width="1871" height="1" fill="#555555"/>
<rect x="79" y="907" width="1" height="3" fill="#555555"/>
<rect x="125" y="907" width="1" height="5" fill="#555555"/>
<rect x="171" y="907" width="1" height="3" fill="#555555"/>
<rect x="217" y="907" width="1" height="3" fill="#555555"/>
<rect x="264" y="907" width="1" height="5" fill="#777"/>
<rect x="310" y="907" width="1" height="5" fill="#555555"/>
<rect x="356" y="907" width="1" height="3" fill="#555555"/>
<rect x="403" y="907" width="1" height="3" fill="#555555"/>
<rect x="449" y="907" width="1" height="3" fill="#555555"/>
<rect x="495" y="907" width="1" height="5" fill="#777"/>
<rect x="542" y="907" width="1" height="3" fill="#555555"/>
<rect x="588" y="907" width="1" height="3" fill="#555555"/>
<rect x="634" y="907" width="1" height="3" fill="#555555"/>
<rect x="681" y="907" width="1" height="5" fill="#555555"/>
<rect x="727" y="907" width="1" height="5" fill="#777"/>
<rect x="773" y="907" width="1" height="3" fill="#555555"/>
<rect x="819" y="907" width="1" height="3" fill="#555555"/>
<rect x="866" y="907" width="1" height="5" fill="#555555"/>
<rect x="912" y="907" width="1" height="3" fill="#555555"/>
<rect x="958" y="907" width="1" height="5" fill="#777"/>
<rect x="1005" y="907" width="1" height="3" fill="#555555"/>
<rect x="1051" y="907" width="1" height="5" fill="#555555"/>
<rect x="1097" y="907" width="1" height="3" fill="#555555"/>
<rect x="1144" y="907" width="1" height="3" fill="#555555"/>
<rect x="1190" y="907" width="1" height="5" fill="#777"/>
<rect x="1236" y="907" width="1" height="5" fill="#555555"/>
<rect x="1283" y="907" width="1" height="3" fill="#555555"/>
<rect x="1329" y="907" width="1" height="3" fill="#555555"/>
<rect x="1375" y="907" width="1" height="3" fill="#555555"/>
<rect x="1422" y="907" width="1" height="5" fill="#777"/>
<rect x="1468" y="907" width="1" height="3" fill="#555555"/>
<rect x="1514" y="907" width="1" height="3" fill="#555555"/>
<rect x="1560" y="907" width="1" height="3" fill="#555555"/>
<rect x="1607" y="907" width="1" height="5" fill="#555555"/>
<rect x="1653" y="907" width="1" height="5" fill="#777"/>
<rect x="1699" y="907" width="1" height="3" fill="#555555"/>
<rect x="1746" y="907" width="1" height="3" fill="#555555"/>
<rect x="1792" y="907" width="1" height="5" fill="#555555"/>
<rect x="1838" y="907" width="1" height="3" fill="#555555"/>
<rect x="1885" y="907" width="1" height="5" fill="#777"/>
<rect x="44" y="382" width="1" height="526" fill="#C85C86"/>
<rect x="249.1" y="912" width="30.8" height="14" fill="#FFFFFF"/>
<rect x="481.1" y="912" width="30.8" height="14" fill="#FFFFFF"/>
<rect x="712.1" y="912" width="30.8" height="14" fill="#FFFFFF"/>
<rect x="940.8" y="912" width="37.5" height="14" fill="#FFFFFF"/>
<rect x="1171.8" y="912" width="37.5" height="14" fill="#FFFFFF"/>
<rect x="1403.8" y="912" width="37.5" height="14" fill="#FFFFFF"/>
<rect x="1635.8" y="912" width="37.5" height="14" fill="#FFFFFF"/>
<rect x="1863.5" y="912" width="44.0" height="14" fill="#FFFFFF"/>
</g>
<path d="M639 906.5H1804" stroke="#C85C86" stroke-width="1" fill="none"/>
<path d="M659 906H1720" stroke="#C85C86" stroke-width="2" fill="none"/>
<path d="M48.0 776.8L49.6 776.6L51.3 775.4L53.6 774.6L56.4 774.3L59.0 773.1L62.0 772.5L64.9 771.3L67.1 770.7L69.4 770.9L71.6 770.2L73.9 769.2L76.4 769.1L78.9 768.5L81.5 767.9L84.3 767.8L87.0 766.5L90.0 766.2L92.3 766.1L94.5 765.2L97.0 764.8L99.5 764.2L102.0 763.2L104.8 763.3L107.4 762.6L109.9 761.5L112.7 761.4L115.2 760.6L117.8 760.2L120.4 759.9L122.6 758.8L125.0 758.5L127.9 758.6L130.5 757.7L133.2 757.5L135.8 757.0L138.2 756.4L140.8 756.8L143.2 756.3L145.5 755.5L147.9 755.6L150.2 755.3L152.5 754.9L155.2 755.0L157.8 754.3L160.2 753.7L162.7 754.0L165.1 753.7L167.5 753.2L169.9 753.2L172.4 752.8L175.0 752.6L177.4 753.0L179.8 752.6L182.3 752.1L184.8 752.5L187.3 752.3L189.9 752.3L192.4 752.6L195.0 752.0L197.5 752.0L200.0 752.6L202.5 752.2L205.0 752.2L207.6 752.4L210.1 752.0L212.7 752.5L215.2 752.7L217.7 752.1L220.2 752.4L222.6 752.8L225.0 752.6L227.6 753.2L230.1 753.2L232.6 752.9L235.0 753.8L237.4 754.2L239.9 754.1L242.4 754.6L244.9 754.7L247.5 754.8L249.8 755.6L252.2 755.5L254.6 755.2L257.0 755.7L259.4 756.0L261.8 755.9L264.4 756.5L267.0 756.3L269.7 756.2L272.5 757.1L274.8 757.0L277.2 756.9L279.6 757.4L282.2 757.3L284.8 757.7L287.4 758.3L290.1 757.9L292.7 758.2L295.3 758.7L297.9 758.6L300.3 759.1L302.7 759.2L305.0 758.8L307.8 759.6L310.6 759.8L313.3 759.5L315.9 760.0L318.4 759.8L320.9 760.0L323.3 760.6L325.6 760.2L327.9 760.0L330.0 760.6L332.8 760.7L335.2 760.8L337.4 761.2L339.5 761.1L341.8 760.9L344.4 761.6L347.5 761.6L349.6 761.3L351.8 761.6L354.2 761.6L356.8 761.5L359.4 762.1L362.0 761.7L364.7 761.4L367.4 761.9L370.1 761.6L372.6 761.7L375.1 761.7L377.5 761.1L380.3 761.4L383.1 761.5L385.9 760.7L388.7 760.8L391.4 760.4L394.0 760.2L396.5 760.4L398.7 759.6L400.7 759.1L402.5 759.3L405.9 758.5L407.4 757.6L410.0 757.2L412.0 756.7L414.2 756.2L416.8 756.7L419.5 756.6L422.2 755.9L424.9 756.1L427.5 755.6L429.9 755.4L432.3 755.6L434.6 754.7L436.9 754.1L439.5 754.3L442.1 753.6L445.0 753.1L447.3 752.7L449.6 751.7L452.3 751.6L455.0 751.4L457.6 750.2L460.4 749.9L463.0 749.2L465.5 748.6L468.0 748.5L470.0 747.5L473.0 746.3L476.0 745.9L478.3 744.6L480.7 743.8L482.8 742.8L484.8 741.4L487.6 740.8L489.9 739.5L491.8 737.8L494.1 736.8L496.5 735.5L498.6 734.3L501.1 733.6L503.3 732.0L505.5 730.7L508.1 730.1L510.0 728.8L512.5 727.1L514.6 725.7L516.6 723.6L520.2 722.1L521.8 720.7L523.6 719.3L525.9 718.4L528.1 717.1L530.5 715.8L533.2 714.7L535.4 712.5L538.5 711.4L541.3 709.5L543.0 708.3L545.0 707.2L546.8 705.6L548.8 704.2L551.3 703.4L553.2 701.5L555.2 699.8L557.7 698.6L559.7 696.9L562.1 695.7L564.3 694.2L566.1 692.3L568.5 691.3L570.7 690.2L572.4 688.6L575.0 687.4L577.2 685.9L579.5 684.6L582.1 683.9L584.1 682.4L586.2 681.0L588.6 680.3L590.8 678.9L593.1 677.9L595.5 676.9L597.4 675.0L600.0 673.9L602.2 673.1L604.1 671.4L606.3 670.2L608.4 668.9L610.4 667.2L612.8 666.3L615.0 664.9L616.8 663.0L619.2 661.9L621.4 660.5L623.5 659.0L625.9 657.9L627.8 656.2L629.8 654.7L632.5 653.9L634.6 652.2L636.9 650.8L639.3 649.5L641.4 647.8L644.0 647.0L646.2 645.5L648.3 643.7L650.8 642.8L653.1 641.4L655.4 640.1L657.8 639.0L659.8 637.2L662.3 636.2L664.9 635.2L667.0 633.5L669.6 632.4L671.9 631.0L674.4 629.7L677.0 629.0L679.1 627.2L681.4 626.0L683.9 625.2L685.9 623.8L688.1 622.9L690.1 622.0L692.5 619.9L695.2 619.1L697.6 617.8L699.6 616.2L701.9 615.2L703.9 613.9L705.8 612.7L708.1 612.1L710.1 611.0L712.4 609.1L715.1 608.4L717.4 607.3L719.8 606.2L722.3 605.4L724.6 603.8L727.5 603.0L729.9 602.4L732.0 600.9L734.5 600.1L737.0 599.1L739.5 597.9L742.3 597.5L744.7 595.9L747.3 594.8L750.1 594.2L752.4 593.0L754.9 592.3L757.3 591.2L759.7 589.9L762.5 589.7L764.9 588.5L767.3 587.3L770.0 586.6L772.4 585.3L775.1 584.7L777.6 583.7L779.9 582.0L782.7 581.4L785.3 580.2L787.8 579.0L790.4 578.0L792.7 576.3L795.4 575.8L797.8 575.0L799.9 573.5L802.8 572.8L805.4 571.7L808.1 571.0L810.7 570.7L813.0 569.3L815.4 568.6L817.9 568.2L820.0 567.0L822.4 565.9L824.5 564.6L826.2 562.9L828.3 561.8L830.6 560.8L832.4 558.8L835.0 557.5L837.0 556.5L838.8 555.2L841.1 554.4L843.4 553.3L845.3 551.5L847.8 550.7L850.2 549.8L852.5 548.3L855.1 547.5L857.4 546.1L859.7 545.0L862.4 544.7L864.7 543.4L867.2 542.2L869.8 541.6L872.3 540.4L875.1 540.0L877.6 538.9L879.9 537.5L882.6 537.3L885.0 536.4L887.6 535.3L890.2 534.7L892.6 533.4L895.2 533.0L897.8 532.6L900.0 531.2L902.6 530.6L905.1 529.9L907.5 528.9L910.1 528.6L912.5 527.4L914.9 526.2L917.6 525.9L920.0 524.8L922.5 523.8L925.1 523.1L927.4 521.8L930.1 521.3L932.6 520.7L934.9 519.2L937.4 518.7L939.8 517.9L942.2 517.0L944.6 516.7L946.9 515.6L949.2 514.4L951.8 514.2L954.3 513.4L956.8 512.3L959.5 511.6L961.7 510.4L964.2 509.9L966.8 509.5L969.2 508.0L971.8 507.3L974.4 506.6L977.0 505.5L979.8 505.1L982.2 503.6L984.8 502.8L987.6 502.4L990.0 501.2L992.5 500.5L995.1 499.5L997.6 498.4L1000.3 498.3L1002.8 497.1L1005.2 495.9L1007.9 495.5L1010.4 494.4L1012.9 493.8L1015.4 493.1L1017.5 491.7L1020.0 491.2L1022.8 490.6L1025.2 489.2L1027.7 488.5L1030.1 487.3L1032.4 486.3L1035.0 486.0L1037.3 484.6L1039.7 483.4L1042.4 482.9L1045.0 481.6L1047.4 481.1L1049.8 480.3L1052.2 479.0L1055.0 478.8L1057.6 478.0L1060.1 476.9L1062.8 476.4L1065.3 475.2L1067.9 474.7L1070.5 474.1L1072.6 472.6L1074.9 471.8L1077.6 471.0L1079.9 469.6L1082.4 468.7L1084.5 467.1L1086.5 465.6L1089.0 464.9L1091.1 463.6L1093.0 462.1L1095.3 461.2L1097.4 459.9L1099.9 458.8L1102.5 458.3L1104.7 456.8L1107.0 455.7L1109.6 455.3L1111.9 454.1L1114.5 453.4L1117.2 452.3L1119.9 450.9L1122.3 450.7L1124.7 449.8L1127.0 448.5L1129.7 447.9L1132.1 446.6L1134.9 446.0L1137.6 445.3L1140.0 443.7L1142.7 443.2L1145.2 442.4L1147.6 441.4L1150.1 441.0L1152.7 439.6L1155.4 439.0L1158.3 438.7L1160.8 437.4L1163.4 436.9L1166.0 436.2L1168.3 435.4L1170.8 435.3L1173.0 434.5L1174.9 433.4L1178.1 432.9L1180.7 432.1L1183.0 431.2L1185.4 430.7L1187.5 429.5L1189.9 428.5L1192.4 428.2L1194.4 426.9L1196.4 425.5L1198.7 424.7L1201.0 423.4L1203.5 422.5L1206.4 421.8L1208.4 420.5L1210.9 420.0L1213.5 419.7L1216.1 418.7L1218.8 418.4L1221.5 417.4L1224.3 416.7L1227.2 416.8L1230.0 415.6L1232.4 415.1L1235.0 414.8L1237.6 414.0L1240.4 414.0L1243.1 413.1L1245.7 412.3L1248.5 412.4L1251.0 411.7L1253.4 411.2L1255.6 411.0L1257.5 410.3L1260.8 409.9L1263.2 409.9L1265.0 409.2L1267.1 408.7L1270.0 408.9L1272.1 408.5L1274.3 408.4L1276.8 408.7L1279.3 408.1L1281.9 407.8L1284.6 408.3L1287.3 408.0L1289.9 408.0L1292.5 408.1L1295.0 407.7L1297.5 408.2L1300.0 408.7L1302.5 408.2L1305.0 408.5L1307.5 408.8L1310.0 408.8L1312.5 409.5L1315.0 409.6L1317.6 409.4L1320.0 410.2L1322.6 410.7L1325.2 410.7L1327.6 411.4L1330.2 411.5L1332.7 411.9L1335.0 413.0L1337.5 413.0L1340.2 413.3L1342.8 414.3L1345.6 414.6L1348.1 415.6L1350.6 416.2L1353.2 416.3L1355.4 417.4L1357.4 418.3L1360.5 418.9L1362.9 420.2L1365.2 420.9L1367.6 421.8L1369.9 423.4L1372.4 423.8L1374.9 424.2L1377.3 425.3L1379.9 425.8L1382.4 426.8L1384.9 427.7L1387.7 428.0L1390.1 429.5L1392.7 430.5L1395.4 431.3L1397.7 432.6L1400.1 433.3L1402.8 435.3L1405.4 437.1L1408.0 438.4L1410.0 440.1L1412.7 440.9L1415.1 441.6L1417.4 442.8L1420.0 443.7L1421.9 445.8L1425.0 448.1L1427.2 449.2L1429.5 450.8L1432.4 451.9L1434.7 454.1L1437.6 455.2L1440.1 456.2L1442.7 458.0L1445.5 458.9L1447.9 460.4L1450.4 461.2L1452.7 462.2L1454.5 464.5L1456.5 466.1L1458.3 467.8L1459.9 469.6L1462.4 470.6L1464.6 471.9L1467.4 474.0L1469.5 474.9L1471.2 476.8L1473.2 478.8L1475.5 480.7L1477.5 483.0L1480.3 484.7L1481.7 486.7L1483.4 488.7L1485.7 490.2L1487.4 492.3L1489.6 494.0L1491.4 496.0L1492.9 498.3L1495.2 499.9L1496.8 501.8L1498.0 504.1L1499.7 505.9L1501.0 508.1L1502.4 510.2L1504.4 511.9L1505.6 514.3L1507.3 516.4L1509.4 517.9L1511.1 519.9L1513.1 521.5L1515.2 523.3L1516.8 525.5L1519.3 526.8L1521.3 528.7L1523.0 530.8L1525.1 532.4L1526.7 534.6L1528.6 536.4L1530.7 538.2L1531.9 540.8L1533.7 542.6L1535.6 544.5L1537.0 546.6L1538.7 548.2L1540.1 549.9L1541.6 552.5L1543.9 554.2L1545.5 556.1L1546.7 558.2L1548.4 559.6L1550.0 561.3L1551.8 563.1L1554.1 564.2L1555.9 565.8L1557.6 567.6L1560.1 568.7L1562.4 570.3L1564.8 572.0L1567.4 573.6L1569.7 575.7L1572.7 576.4L1575.3 578.1L1578.4 579.4L1581.5 580.7L1584.2 581.5L1586.1 581.6L1588.8 580.3L1591.4 581.1L1595.0 582.5L1597.2 583.1L1599.8 583.5L1602.3 584.6L1605.0 585.0L1607.5 585.5L1609.6 586.9L1612.1 587.9L1615.0 588.8L1617.2 589.6L1619.7 589.7L1622.2 590.5L1624.7 591.7L1627.5 591.7L1630.0 592.4L1632.5 593.2L1635.0 593.6L1637.4 594.8L1640.0 595.2L1642.6 595.3L1645.0 596.4L1647.5 596.7L1650.2 596.9L1652.8 597.4L1655.4 597.1L1657.8 597.6L1659.9 598.4L1662.9 598.4L1665.5 599.0L1667.8 599.8L1670.0 599.8L1672.6 600.0L1674.9 599.7L1677.5 598.9L1679.8 599.3L1682.1 600.1L1684.8 600.1L1687.5 600.9L1689.6 601.3L1691.8 601.3L1694.0 602.2L1696.6 603.3L1700.1 603.4L1702.0 604.3L1704.3 604.9L1706.9 605.3L1709.4 606.4L1712.2 606.6L1715.0 607.2L1717.6 608.5L1720.3 608.9L1722.7 609.8L1725.0 610.5L1728.0 611.3L1730.4 613.1L1733.0 613.9L1735.5 614.9L1737.6 616.5L1740.2 617.7L1742.3 619.7L1744.4 621.0L1746.8 622.0L1748.5 623.9L1750.4 625.6L1752.7 627.0L1754.4 629.0L1756.6 630.5L1758.4 632.4L1759.7 634.8L1761.7 636.5L1763.4 638.7L1764.7 641.2L1766.4 643.5L1767.4 646.2L1769.1 648.4L1770.5 650.6L1771.1 653.1L1772.4 655.1L1773.9 657.6L1774.9 660.1L1776.2 662.1L1776.8 664.3L1777.3 666.6L1778.9 668.7L1780.1 671.0L1781.0 673.4L1782.5 675.6L1783.4 678.2L1784.9 680.7L1786.5 683.6L1786.8 685.9L1787.8 688.0L1789.0 690.3L1789.6 692.8L1790.9 695.2L1791.5 697.9L1792.1 700.5L1793.6 702.7L1794.3 705.2L1794.9 707.6L1796.1 710.2L1796.7 712.9L1798.1 715.3L1799.2 717.8L1799.5 720.5L1800.7 722.8L1801.7 725.1L1802.4 727.5L1803.8 730.0L1804.2 732.8L1805.2 735.4L1806.7 737.7L1807.1 740.3L1808.0 742.7L1808.8 745.0L1809.3 747.7L1810.6 750.1L1811.1 752.6L1811.2 755.2L1812.1 757.5L1812.6 760.0L1812.8 762.5L1813.4 764.9L1813.3 767.3L1813.1 769.8L1813.8 772.4L1813.6 775.0L1813.2 777.3L1813.3 779.7L1812.8 782.0L1812.5 784.5L1812.8 787.1L1811.9 789.7L1811.5 792.5L1811.7 794.7L1811.4 796.9L1811.1 799.2L1811.2 801.5L1810.6 803.9L1810.2 806.4L1810.7 809.1L1810.1 811.9L1809.9 815.0L1810.0 817.1L1809.6 819.3L1809.8 821.6L1810.1 824.0L1809.4 826.5L1809.3 829.0L1809.7 831.6L1809.3 834.2L1809.5 836.8L1809.3 839.5L1808.8 842.1L1809.4 844.8L1809.3 847.4L1808.8 850.0L1809.0 852.5L1808.7 855.1L1808.7 857.7L1809.1 860.5L1808.4 863.2L1808.5 866.0L1808.7 868.8L1808.4 871.5L1808.6 874.2L1808.2 876.8L1807.9 879.2L1808.5 881.6L1808.4 883.7L1807.9 885.7L1807.8 887.5L1807.7 891.7L1807.7 894.6L1808.0 896.7L1807.4 898.3L1806.6 899.9L1805.7 903.9L1804.0 906.0" stroke="#C85C86" stroke-width="1" fill="none" stroke-linejoin="round" shape-rendering="crispEdges"/>
<path d="M63.0 762.8L64.9 763.1L67.1 761.8L69.9 761.3L73.2 761.4L76.5 760.5L80.0 760.1L82.1 759.1L84.5 759.2L87.0 759.5L89.4 758.3L92.0 758.0L94.6 757.8L97.2 757.0L99.9 757.5L102.5 756.6L104.9 755.6L107.5 756.2L110.1 755.9L112.6 755.3L115.1 755.5L117.6 754.6L120.2 754.5L122.7 755.3L125.2 754.3L127.6 753.9L130.0 754.2L132.6 753.5L135.2 753.7L137.7 753.8L140.1 752.5L142.6 752.7L145.1 753.1L147.5 752.4L150.0 752.5L152.5 752.4L155.0 751.6L157.6 752.4L160.1 752.6L162.6 751.6L165.2 752.0L167.7 752.1L170.2 751.9L172.6 752.7L175.0 752.4L177.6 751.7L180.0 752.7L182.4 752.9L184.9 752.6L187.2 753.2L189.7 753.0L192.3 752.8L195.0 754.1L197.3 753.8L199.7 753.3L202.2 754.0L204.8 754.0L207.3 754.1L209.9 754.9L212.6 754.1L215.1 754.3L217.5 755.3L220.0 755.0L222.6 755.2L225.2 755.6L227.8 755.1L230.2 756.1L232.6 756.7L235.2 756.0L237.6 756.5L240.0 757.1L242.5 757.0L245.2 758.0L248.0 757.9L250.8 757.7L253.4 759.1L256.2 759.1L258.9 759.4L261.6 759.9L264.3 759.7L266.8 761.1L269.5 761.4L272.2 760.9L274.7 762.0L277.3 762.3L279.9 762.8L282.4 763.8L285.1 763.3L287.6 764.0L289.8 765.4L292.3 765.4L294.8 765.9L297.1 766.7L299.8 766.7L302.2 768.0L304.9 768.7L307.4 768.1L309.7 768.9L312.2 769.5L314.8 769.5L317.3 770.4L320.0 770.2L322.6 770.0L325.0 771.4L327.6 771.5L330.0 771.5L332.6 772.4L335.5 772.3L338.1 773.6L340.8 774.4L343.6 774.0L346.0 775.2L348.4 775.8L350.6 775.9L352.5 776.8L355.8 777.0L358.1 776.8L359.9 777.7L362.5 778.2L364.7 777.6L367.0 777.9L369.5 778.1L372.1 777.5L374.8 778.4L377.5 778.0L379.8 776.9L382.4 777.3L385.0 777.0L387.5 776.4L390.2 776.5L392.5 775.2L394.9 774.6L397.8 774.9L400.1 773.4L402.5 772.5L405.0 771.8L407.3 770.2L410.2 769.9L412.5 768.7L414.5 766.7L417.4 766.2L419.7 764.7L422.1 763.5L424.5 762.5L426.0 760.6L428.8 759.2L431.1 757.9L432.4 755.6L435.1 753.8L436.8 752.4L438.6 750.8L441.3 750.1L443.2 748.0L445.2 746.1L448.0 745.2L449.9 743.2L452.3 741.7L454.3 739.8L456.0 737.6L458.9 736.6L460.7 734.4L462.7 732.3L465.1 730.6L466.6 728.5L469.0 727.3L470.8 725.4L471.9 722.9L474.3 721.6L476.3 719.8L478.0 717.8L480.2 716.3L481.7 713.8L484.1 712.2L486.7 710.7L488.2 708.1L490.7 706.5L492.6 704.4L494.7 702.9L496.9 701.7L498.6 698.5L501.2 697.0L503.2 695.3L505.1 693.2L507.7 691.5L509.0 689.3L511.1 688.1L513.6 687.4L515.2 685.2L517.3 683.5L519.9 682.0L522.4 679.9L524.7 679.1L526.3 677.1L528.0 675.1L530.7 674.3L532.7 672.3L535.0 670.7L537.3 669.0L539.2 666.8L542.1 666.1L544.1 664.1L546.0 662.2L548.5 661.2L550.4 659.4L552.8 658.3L555.2 657.3L556.7 655.0L559.1 654.0L561.6 653.2L563.4 651.3L565.8 650.3L567.9 648.8L569.7 647.0L572.4 646.5L574.5 645.2L576.2 643.2L578.7 642.3L580.8 641.0L582.9 639.5L585.4 638.9L587.2 637.0L589.1 635.3L591.8 634.9L593.8 633.4L595.8 631.8L598.2 630.9L600.0 629.0L602.3 627.9L604.9 627.3L606.6 625.2L608.7 623.8L611.1 623.0L613.1 621.3L615.5 620.4L617.7 619.4L619.5 617.1L622.3 616.4L624.8 615.3L626.9 613.5L629.5 612.6L631.6 610.8L634.1 609.8L636.8 609.3L638.7 607.1L641.2 606.1L643.7 605.2L646.0 603.7L648.7 603.2L650.9 601.6L653.1 600.0L656.0 599.9L658.2 598.5L660.4 597.3L662.9 596.6L664.8 595.1L667.7 594.5L670.5 593.8L672.6 591.8L675.2 591.3L677.7 590.4L680.0 589.2L682.7 588.9L684.9 587.2L687.3 586.2L690.1 586.2L692.4 584.8L694.8 583.9L697.4 583.3L699.7 581.8L702.5 581.8L705.1 580.8L707.2 579.1L709.8 578.9L712.2 578.0L714.5 577.0L717.2 576.6L719.4 574.9L722.0 574.1L725.0 574.0L727.4 572.3L729.8 571.7L732.2 570.9L734.5 569.7L737.4 569.8L739.8 568.6L742.1 567.1L745.0 567.0L747.4 565.9L750.1 565.3L752.6 564.6L754.8 562.9L757.5 562.7L760.0 562.4L762.2 560.9L764.7 560.5L767.1 559.7L769.3 558.5L772.0 558.7L774.3 557.6L776.4 556.0L778.9 555.8L781.3 554.9L783.5 553.7L786.0 553.1L788.0 551.4L790.0 550.0L792.7 549.8L794.8 548.4L796.8 546.8L799.3 546.1L801.4 544.5L803.8 543.7L806.5 543.4L808.4 541.6L810.8 540.7L813.4 540.6L815.8 539.4L818.3 538.9L820.8 538.1L823.1 536.6L825.8 536.8L828.3 536.2L830.4 534.7L832.8 534.3L835.0 533.5L837.7 532.2L840.6 532.1L842.7 530.3L845.0 529.1L847.6 528.8L849.8 527.4L852.3 526.4L854.9 525.2L857.2 523.2L859.8 522.9L862.0 521.8L863.9 519.8L866.5 518.8L868.6 517.1L871.1 515.9L873.8 514.9L875.5 512.5L878.1 511.6L880.7 510.6L882.7 509.0L885.1 508.3L887.5 506.5L890.0 505.3L892.9 505.2L895.1 503.5L897.6 502.5L900.2 501.9L902.5 500.6L905.2 500.5L907.6 499.4L909.8 497.6L912.6 497.5L915.1 496.5L917.5 495.4L920.1 494.8L922.3 493.1L925.0 492.7L927.7 492.3L929.9 490.5L932.5 489.9L935.0 489.0L937.4 487.9L940.2 487.7L942.4 485.9L944.9 484.8L947.7 484.7L950.0 483.2L952.5 482.4L954.9 481.5L957.0 479.9L959.6 479.7L962.2 478.9L964.1 476.9L966.7 476.3L968.9 475.1L971.1 473.9L973.6 473.5L975.6 471.9L977.5 470.3L980.1 470.2L982.6 469.2L985.0 468.0L987.6 467.5L989.9 466.0L992.5 465.6L995.2 465.4L997.4 463.6L1000.0 462.9L1002.5 462.1L1004.9 460.7L1007.7 460.3L1009.9 458.4L1012.3 457.1L1015.2 456.9L1017.5 455.2L1020.0 454.3L1022.5 453.2L1024.8 451.8L1027.7 451.9L1030.1 450.6L1032.3 449.0L1035.1 448.8L1037.4 447.5L1040.1 446.9L1042.6 446.2L1044.5 444.4L1047.0 443.9L1049.6 443.7L1051.7 442.2L1054.3 441.5L1057.0 440.4L1059.9 439.3L1062.4 439.5L1064.6 438.2L1067.0 436.9L1069.8 436.9L1072.4 435.7L1075.2 435.5L1077.9 434.5L1080.4 433.0L1083.3 433.3L1085.7 432.4L1087.8 431.2L1090.1 430.9L1093.0 429.1L1096.2 428.7L1098.8 427.4L1100.8 425.5L1103.3 425.0L1105.4 424.0L1107.4 422.8L1110.5 422.5L1112.8 421.1L1115.1 420.4L1117.7 420.8L1120.0 419.6L1122.3 418.3L1124.8 417.4L1126.9 415.6L1129.8 415.1L1132.6 414.0L1134.6 412.6L1137.2 412.6L1139.8 412.3L1142.3 411.6L1145.0 411.8L1147.5 410.5L1149.9 409.9L1153.0 410.2L1155.5 408.6L1158.4 408.0L1161.0 407.1L1163.5 406.2L1166.1 406.6L1169.3 405.3L1172.3 405.4L1175.2 405.7L1178.0 405.1L1180.9 405.0L1183.4 403.2L1186.1 402.6L1188.5 402.8L1191.7 401.6L1195.0 402.2L1197.4 401.7L1200.2 401.9L1203.1 402.6L1206.0 401.4L1209.1 402.1L1212.3 402.0L1215.4 402.2L1218.0 402.2L1221.1 401.3L1224.0 402.6L1226.0 402.7L1228.4 402.3L1231.0 403.2L1234.4 403.4L1236.6 404.3L1239.2 405.5L1242.4 405.1L1245.2 406.5L1248.1 407.2L1250.7 407.9L1252.9 408.9L1256.3 408.9L1258.4 410.5L1260.2 411.8L1262.6 412.1L1265.4 413.7L1268.2 415.0L1271.0 416.5L1273.9 417.5L1277.2 416.8L1280.2 418.6L1282.9 419.4L1285.4 421.3L1288.2 422.5L1290.8 423.6L1293.3 425.8L1296.4 425.8L1299.0 427.2L1301.9 428.5L1304.5 430.4L1307.4 432.2L1310.1 432.8L1311.8 435.0L1314.4 436.5L1317.4 438.4L1319.6 439.5L1322.4 440.3L1324.5 442.8L1327.6 443.6L1330.3 445.0L1332.7 446.4L1335.1 447.2L1338.0 449.4L1341.2 449.3L1343.7 450.5L1346.1 452.3L1348.5 453.3L1350.4 455.4L1353.0 456.6L1355.1 458.6L1357.2 461.0L1360.0 461.5L1362.3 463.2L1365.0 464.4L1367.5 465.8L1369.8 467.7L1372.9 468.2L1374.7 470.4L1376.5 472.2L1378.9 473.5L1380.6 475.6L1383.1 477.1L1385.0 479.5L1386.3 481.7L1388.9 483.0L1390.6 485.2L1392.5 487.4L1394.5 489.4L1395.9 492.0L1398.6 493.3L1400.2 495.3L1401.6 497.9L1403.9 499.3L1405.5 501.4L1407.5 503.0L1409.6 504.5L1410.5 507.1L1412.3 508.9L1414.4 510.5L1415.4 512.9L1416.9 515.0L1418.3 517.1L1419.1 519.6L1421.3 521.4L1422.8 523.8L1423.5 526.5L1425.6 528.4L1427.0 531.0L1429.0 533.2L1430.5 535.7L1431.4 538.5L1433.8 540.2L1435.2 542.4L1436.8 545.1L1438.6 547.5L1439.7 550.1L1442.2 551.7L1443.5 554.0L1444.6 556.6L1446.8 558.2L1448.3 560.3L1450.1 562.1L1452.1 563.6L1453.1 566.0L1454.7 567.8L1457.3 569.2L1458.7 571.8L1460.7 573.7L1462.3 575.7L1463.3 577.8L1465.7 579.9L1466.1 582.5L1467.1 585.3L1469.2 586.4L1471.0 588.1L1473.2 589.6L1475.7 590.7L1477.2 592.9L1479.7 594.3L1482.3 595.4L1484.4 597.6L1487.6 598.6L1489.5 599.7L1491.8 600.3L1494.5 600.0L1496.9 601.2L1499.5 602.1L1502.3 601.8L1505.0 602.7L1507.4 602.6L1510.0 603.0L1512.5 604.2L1515.2 603.6L1517.8 603.6L1520.3 604.5L1522.7 604.3L1525.0 604.6L1527.7 604.9L1530.1 603.7L1532.5 603.9L1534.9 604.5L1537.3 603.7L1540.0 603.6L1542.3 604.0L1544.8 603.7L1547.3 604.6L1549.9 605.2L1552.7 604.4L1555.2 605.3L1557.7 605.8L1560.0 605.6L1562.8 606.3L1565.4 605.7L1567.8 605.2L1570.2 606.2L1572.5 606.2L1575.0 605.7L1577.5 606.5L1579.9 606.7L1582.4 607.2L1584.7 608.7L1587.4 608.6L1590.1 608.8L1592.3 610.0L1594.8 610.1L1597.3 610.5L1599.8 611.3L1602.5 610.8L1605.0 611.8L1607.4 613.1L1610.1 612.9L1612.6 613.9L1615.1 614.7L1617.8 615.3L1620.0 617.1L1622.7 617.3L1625.2 617.7L1627.5 619.6L1630.2 620.3L1632.6 621.7L1635.1 622.7L1637.8 623.2L1639.8 625.4L1642.4 626.4L1645.3 627.3L1647.6 629.1L1650.3 629.9L1652.3 631.8L1654.3 632.9L1658.0 633.4L1660.1 635.3L1662.5 636.3L1664.7 638.0L1666.6 640.0L1669.2 641.6L1670.1 643.9L1671.3 645.9L1673.5 647.4L1674.9 650.0L1676.3 651.8L1678.0 653.6L1678.8 656.1L1680.8 658.0L1682.8 659.9L1683.4 662.7L1685.1 664.9L1686.3 667.4L1687.6 670.0L1689.4 672.2L1689.6 675.3L1691.1 677.6L1692.7 679.6L1693.3 682.1L1694.6 684.1L1695.6 686.3L1695.9 688.9L1697.9 691.1L1698.8 693.6L1698.9 696.5L1700.3 699.0L1700.8 702.0L1702.3 704.6L1703.1 707.3L1703.1 710.2L1705.1 712.7L1705.8 715.6L1706.9 718.3L1707.8 720.9L1708.4 723.8L1710.6 726.0L1711.1 728.5L1711.7 731.1L1713.4 733.2L1714.2 735.7L1715.6 737.9L1717.0 740.0L1717.0 742.7L1718.4 745.2L1719.8 747.7L1720.0 750.5L1721.2 752.9L1721.5 755.5L1722.1 757.7L1724.8 760.4L1725.4 763.4L1727.1 766.2L1727.5 768.7L1727.8 771.3L1728.6 774.1L1727.6 777.1L1728.2 780.0L1728.7 782.4L1727.9 784.7L1727.9 787.1L1727.7 789.6L1726.8 792.1L1727.5 795.1L1727.2 797.2L1726.0 799.2L1725.8 801.4L1725.9 803.8L1725.1 806.2L1725.3 808.9L1724.8 811.8L1724.0 815.0L1724.8 817.1L1724.7 819.3L1724.1 821.7L1724.5 824.2L1724.1 826.8L1724.0 829.5L1725.0 832.2L1724.1 834.9L1724.0 837.6L1724.6 840.3L1724.1 842.9L1724.6 845.4L1724.6 847.8L1723.6 850.0L1724.3 852.9L1724.4 855.7L1723.7 858.2L1723.9 860.7L1723.5 863.1L1723.1 865.5L1723.9 867.8L1723.6 870.2L1722.5 872.5L1723.0 875.0L1723.1 877.6L1722.8 880.3L1723.4 883.1L1722.5 885.9L1722.8 888.7L1723.6 891.4L1722.8 893.9L1722.9 896.2L1723.1 898.3L1722.5 899.9L1721.6 904.6L1719.5 905.5" stroke="#C85C86" stroke-width="2" fill="none" stroke-linejoin="round" shape-rendering="crispEdges"/>
<circle cx="1206" cy="400.6" r="3.2" fill="#C85C86"/>
<text x="42" y="913" text-anchor="end" fill="#C85C86" font-family="Liberation Sans, sans-serif" font-size="12">0</text>
<text x="42" y="807" text-anchor="end" fill="#C85C86" font-family="Liberation Sans, sans-serif" font-size="12">5</text>
<text x="42" y="701" text-anchor="end" fill="#C85C86" font-family="Liberation Sans, sans-serif" font-size="12">10</text>
<text x="42" y="595" text-anchor="end" fill="#C85C86" font-family="Liberation Sans, sans-serif" font-size="12">15</text>
<text x="42" y="488" text-anchor="end" fill="#C85C86" font-family="Liberation Sans, sans-serif" font-size="12">20</text>
<text x="264.5" y="923" text-anchor="middle" fill="#606060" font-family="Liberation Sans, sans-serif" font-size="12">7000</text>
<text x="496.5" y="923" text-anchor="middle" fill="#606060" font-family="Liberation Sans, sans-serif" font-size="12">8000</text>
<text x="727.5" y="923" text-anchor="middle" fill="#606060" font-family="Liberation Sans, sans-serif" font-size="12">9000</text>
<text x="959.5" y="923" text-anchor="middle" fill="#606060" font-family="Liberation Sans, sans-serif" font-size="12">10000</text>
<text x="1190.5" y="923" text-anchor="middle" fill="#606060" font-family="Liberation Sans, sans-serif" font-size="12">11000</text>
<text x="1422.5" y="923" text-anchor="middle" fill="#606060" font-family="Liberation Sans, sans-serif" font-size="12">12000</text>
<text x="1654.5" y="923" text-anchor="middle" fill="#606060" font-family="Liberation Sans, sans-serif" font-size="12">13000</text>
<text x="1887" y="923" text-anchor="middle" fill="#606060" font-family="Liberation Sans, sans-serif" font-size="12">14RPM</text>
<text x="1184" y="395" fill="#C85C86" font-family="Liberation Sans, sans-serif" font-size="12">23.8</text>
<text x="1265" y="404" fill="#C85C86" font-family="Liberation Sans, sans-serif" font-size="12">23.5</text>
<text transform="translate(16.2 494.5) rotate(-90)" fill="#C85C86" font-family="Liberation Sans, sans-serif" font-size="12" textLength="107" lengthAdjust="spacing">Motor Leistung (PS)</text>
</svg>
<div class="r" style="left:2px;top:1058px;width:1916px;height:1px;background:#F4F4FF;"></div>
<div class="r" style="left:0px;top:1059px;width:1918px;height:1px;background:#707070;"></div>
<div class="r" style="left:0px;top:1060px;width:1918px;height:1px;background:#A8A8A8;"></div>
<div class="r" style="left:0px;top:1061px;width:1920px;height:19px;background:#F0F0F0;"></div>
<div class="r" style="left:2px;top:1079px;width:1918px;height:1px;background:#FFFFFF;"></div>
<div class="r" style="left:0px;top:1061px;width:1920px;height:1px;background:#FFFFFF;"></div>
<div class="r" style="left:2px;top:1063px;width:131px;height:16px;border-left:1px solid #A0A0A0;border-top:1px solid #A0A0A0;border-right:1px solid #fff;"></div>
<div class="r" style="left:136px;top:1063px;width:132px;height:16px;border-left:1px solid #A0A0A0;border-top:1px solid #A0A0A0;border-right:1px solid #fff;"></div>
<div class="r" style="left:270px;top:1063px;width:200px;height:16px;border-left:1px solid #A0A0A0;border-top:1px solid #A0A0A0;border-right:1px solid #fff;"></div>
<div class="r" style="left:471px;top:1063px;width:78px;height:16px;border-left:1px solid #A0A0A0;border-top:1px solid #A0A0A0;border-right:1px solid #fff;"></div>
<div class="r" style="left:552px;top:1063px;width:1012px;height:16px;border-left:1px solid #A0A0A0;border-top:1px solid #A0A0A0;border-right:1px solid #fff;"></div>
<div class="r" style="left:1565px;top:1063px;width:166px;height:16px;border-left:1px solid #A0A0A0;border-top:1px solid #A0A0A0;border-right:1px solid #fff;"></div>
<div class="r" style="left:1733px;top:1063px;width:97px;height:16px;border-left:1px solid #A0A0A0;border-top:1px solid #A0A0A0;border-right:1px solid #fff;"></div>
<div class="r" style="left:1831px;top:1063px;width:21px;height:16px;border-left:1px solid #A0A0A0;border-top:1px solid #A0A0A0;border-right:1px solid #fff;"></div>
<div class="r" style="left:1855px;top:1063px;width:21px;height:16px;border-left:1px solid #A0A0A0;border-top:1px solid #A0A0A0;border-right:1px solid #fff;"></div>
<div class="r" style="left:1879px;top:1063px;width:21px;height:16px;border-left:1px solid #A0A0A0;border-top:1px solid #A0A0A0;border-right:1px solid #fff;"></div>
<span class="t" style="top:1065.69px;font-size:11px;left:3.8px;transform:scaleX(0.9811);transform-origin:0 0;">24 Leistungsmessungen</span>
<div class="r" style="left:138px;top:1063px;width:130px;height:16px;overflow:hidden"><span class="t" style="top:2.69px;font-size:11px;left:2px;transform:scaleX(0.9300);transform-origin:0 0;">SIMSON_MODEL_KS TUNING 85M__015</span></div>
<span class="t" style="top:1065.69px;font-size:11px;left:274px;transform:scaleX(0.9558);transform-origin:0 0;">HP1 Front1= 0.0 PS  [372:6,44]</span>
<span class="t" style="top:1065.69px;font-size:11px;left:475px;transform:scaleX(0.9364);transform-origin:0 0;">RPM= 15426.4</span>
<span class="t" style="top:1065.69px;font-size:11px;left:556px;transform:scaleX(0.9682);transform-origin:0 0;">Test wurde ÜBER VORIGE DATEI gespeichert</span>
<span class="t" style="top:1065.69px;font-size:11px;left:1589.5px;transform:scaleX(0.9783);transform-origin:0 0;">getrennt</span>
<span class="t" style="top:1065.69px;font-size:11px;left:1738px;transform:scaleX(1.0027);transform-origin:0 0;">Leerelauf</span>
<div class="r" style="left:1568px;top:1064px;width:17px;height:15px;background:#FF0000;"></div>
<svg style="left:1560px;top:1058px" width="40" height="22" viewBox="1560 1058 40 22"><g stroke="#000" stroke-width="0.9" stroke-linejoin="round"><path d="M1581 1066.8L1584.6 1063.6L1585.6 1064.8L1582.2 1068Z" fill="#C8C8C8"/><path d="M1574.3 1067.6L1577.4 1065L1582.6 1070.6L1580 1073.6Z" fill="#C4C4C4"/><path d="M1570.3 1071.6L1572.6 1069.4L1578.6 1075.4L1575.6 1077.8Z" fill="#C4C4C4"/><path d="M1572.2 1075.8L1568.2 1079.2L1569.4 1080L1573.4 1077Z" fill="#C8C8C8"/></g><path d="M1576 1067.4L1580.4 1072M1572 1071.4L1576.6 1076" stroke="#fff" stroke-width="0.8"/></svg>
<div class="r" style="left:1832px;top:1064px;width:15px;height:15px;background:#FF0000;"></div>
<svg style="left:1832px;top:1064px" width="15" height="15" viewBox="1832 1064 15 15"><path d="M1838.6 1071.5V1065.4Q1838.6 1064.4 1840.5 1064.4Q1842.4 1064.4 1842.4 1065.4V1071.5Z" fill="#fff" stroke="#000" stroke-width="0.9"/><path d="M1839.6 1066.5H1841.4M1839.6 1068.2H1841.4M1839.6 1069.9H1841.4" stroke="#000" stroke-width="0.7"/><circle cx="1840.6" cy="1075.2" r="4" fill="#0818F0" stroke="#000" stroke-width="0.9"/><path d="M1838.4 1074.6L1839.8 1073.2" stroke="#20D8FF" stroke-width="0.9"/></svg>
<div class="r" style="left:1856px;top:1064px;width:15px;height:15px;background:#FF0000;"></div>
<span class="t" style="top:1064.35px;font-size:14px;font-weight:bold;left:1856.2px;transform:scaleX(0.4691);transform-origin:0 0;-webkit-text-stroke:0.5px #000;">OBD</span>
<div class="r" style="left:1880px;top:1064px;width:15px;height:15px;background:#FF0000;"></div>
<span class="t" style="top:1065.20px;font-size:13px;font-weight:bold;left:1880.2px;transform:scaleX(0.5536);transform-origin:0 0;-webkit-text-stroke:0.5px #000;">×OS</span>
</div></body></html>
